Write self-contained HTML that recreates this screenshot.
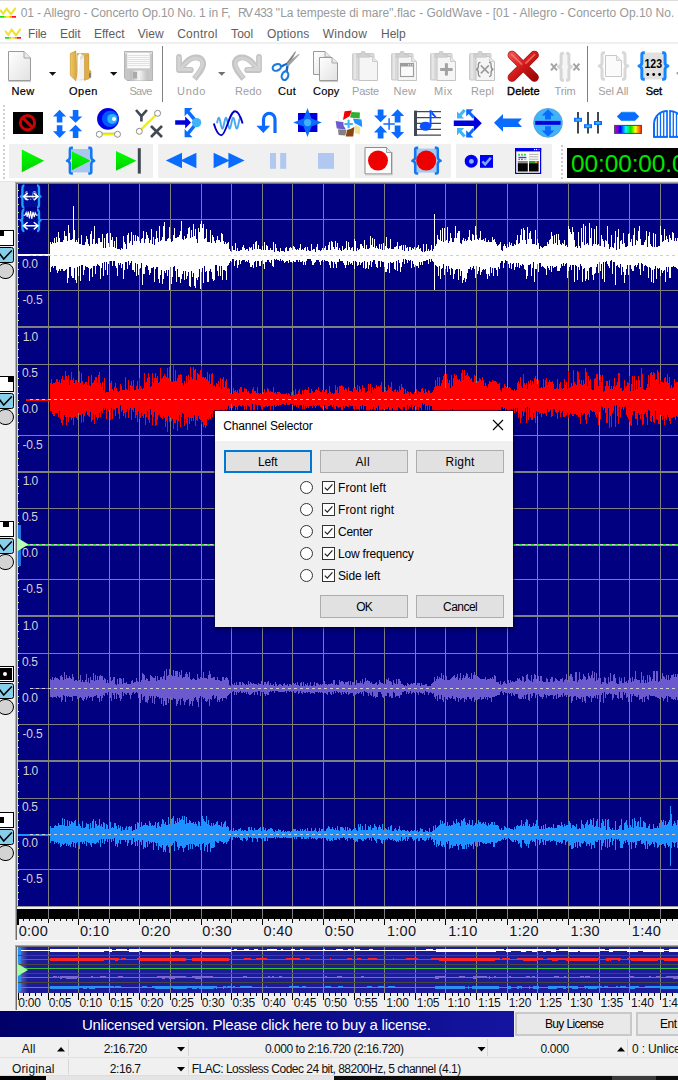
<!DOCTYPE html><html><head><meta charset="utf-8"><title>GoldWave</title><style>
*{margin:0;padding:0;box-sizing:border-box}
html,body{width:678px;height:1080px;overflow:hidden;background:#f0f0f0;font-family:"Liberation Sans",sans-serif}
#r{position:absolute;left:0;top:0;width:678px;height:1080px;overflow:hidden;background:#f0f0f0}
.t{position:absolute;white-space:nowrap;line-height:20px;height:20px}
.a{position:absolute}
svg{position:absolute;overflow:visible}
</style></head><body><div id="r">
<div class="a" style="left:0;top:0;width:678px;height:43px;background:#fff"></div>
<div class="a" style="left:0;top:0;width:678px;height:1px;background:#dcdcdc"></div>
<svg style="left:0px;top:7.0px" width="17" height="12" viewBox="0 0 17 12"><polyline points="0.3,2.6 3.3,6.4 6.6,1.2 11,6.8 15.6,0.6" fill="none" stroke="#c8b400" stroke-width="1.6" stroke-linejoin="miter" transform="translate(0,0.7)" opacity="0.6"/><polyline points="0.3,2.6 3.3,6.4 6.6,1.2 11,6.8 15.6,0.6" fill="none" stroke="#f4e61e" stroke-width="1.5" stroke-linejoin="miter"/><rect x="0" y="9" width="4" height="1.7" fill="#10e010"/><rect x="4" y="9" width="2.5" height="1.7" fill="#a0e800"/><rect x="6.5" y="9" width="3" height="1.7" fill="#f8f000"/><rect x="9.5" y="9" width="2.5" height="1.7" fill="#ff9000"/><rect x="12" y="9" width="4" height="1.7" fill="#ff1010"/></svg>
<svg style="left:5px;top:28.1px" width="17" height="12" viewBox="0 0 17 12"><polyline points="0.3,2.6 3.3,6.4 6.6,1.2 11,6.8 15.6,0.6" fill="none" stroke="#c8b400" stroke-width="1.6" stroke-linejoin="miter" transform="translate(0,0.7)" opacity="0.6"/><polyline points="0.3,2.6 3.3,6.4 6.6,1.2 11,6.8 15.6,0.6" fill="none" stroke="#f4e61e" stroke-width="1.5" stroke-linejoin="miter"/><rect x="0" y="9" width="4" height="1.7" fill="#10e010"/><rect x="4" y="9" width="2.5" height="1.7" fill="#a0e800"/><rect x="6.5" y="9" width="3" height="1.7" fill="#f8f000"/><rect x="9.5" y="9" width="2.5" height="1.7" fill="#ff9000"/><rect x="12" y="9" width="4" height="1.7" fill="#ff1010"/></svg>
<div class="t" style="left:20.70px;top:2.54px;font-size:12px;color:#999;letter-spacing:-0.091px;">01 - Allegro - Concerto Op.10 No. 1 in F,</div>
<div class="t" style="left:238.00px;top:2.54px;font-size:12px;color:#999;letter-spacing:-1.327px;">RV</div>
<div class="t" style="left:254.20px;top:2.54px;font-size:12px;color:#999;letter-spacing:-0.607px;">433</div>
<div class="t" style="left:275.60px;top:2.54px;font-size:12px;color:#999;letter-spacing:-0.024px;">''La tempeste di mare''.flac</div>
<div class="t" style="left:419.20px;top:2.54px;font-size:12px;color:#999;letter-spacing:0.002px;">- GoldWave - [01 - Allegro - Concerto Op.10 No.</div>
<div class="t" style="left:28.00px;top:24.34px;font-size:12px;color:#5e5e5e;letter-spacing:-0.184px;">File</div>
<div class="t" style="left:59.90px;top:24.34px;font-size:12px;color:#5e5e5e;letter-spacing:0.005px;">Edit</div>
<div class="t" style="left:93.90px;top:24.34px;font-size:12px;color:#5e5e5e;letter-spacing:0.039px;">Effect</div>
<div class="t" style="left:137.70px;top:24.34px;font-size:12px;color:#5e5e5e;letter-spacing:0.027px;">View</div>
<div class="t" style="left:177.20px;top:24.34px;font-size:12px;color:#5e5e5e;letter-spacing:0.245px;">Control</div>
<div class="t" style="left:231.10px;top:24.34px;font-size:12px;color:#5e5e5e;letter-spacing:0.047px;">Tool</div>
<div class="t" style="left:267.10px;top:24.34px;font-size:12px;color:#5e5e5e;letter-spacing:0.121px;">Options</div>
<div class="t" style="left:322.70px;top:24.34px;font-size:12px;color:#5e5e5e;letter-spacing:0.320px;">Window</div>
<div class="t" style="left:381.10px;top:24.34px;font-size:12px;color:#5e5e5e;letter-spacing:-0.045px;">Help</div>
<div class="a" style="left:0;top:43px;width:678px;height:136px;background:#f0f0f0"></div>
<div class="a" style="left:0;top:179px;width:678px;height:3px;background:#fff"></div>
<div class="a" style="left:0;top:42px;width:678px;height:2px;background:#f0f0f0"></div>
<div class="a" style="left:0;top:44px;width:678px;height:138px;background:#fff"></div>
<div class="a" style="left:9px;top:144px;width:144px;height:34px;background:#f0f0f0"></div>
<div class="a" style="left:158px;top:144px;width:192px;height:34px;background:#f0f0f0"></div>
<div class="a" style="left:355px;top:144px;width:96px;height:34px;background:#f0f0f0"></div>
<div class="a" style="left:456px;top:144px;width:96px;height:34px;background:#f0f0f0"></div>
<div class="a" style="left:0;top:181px;width:678px;height:1px;background:#e4e4e4"></div>
<div class="a" style="left:3px;top:105px;width:2px;height:36px;background:repeating-linear-gradient(180deg,#d0d0d0 0,#d0d0d0 2px,#fff 2px,#fff 4px)"></div>
<div class="a" style="left:3px;top:145px;width:2px;height:35px;background:repeating-linear-gradient(180deg,#d0d0d0 0,#d0d0d0 2px,#fff 2px,#fff 4px)"></div>
<div class="a" style="left:561px;top:145px;width:2px;height:36px;background:repeating-linear-gradient(180deg,#d0d0d0 0,#d0d0d0 2px,#fff 2px,#fff 4px)"></div>
<div class="a" style="left:162px;top:46px;width:1px;height:56px;background:#808080"></div>
<div class="a" style="left:587px;top:46px;width:1px;height:56px;background:#808080"></div>
<div class="t" style="left:11.50px;top:81.09px;font-size:11px;color:#000;letter-spacing:0.332px;-webkit-text-stroke:0.18px #000;">New</div>
<div class="t" style="left:69.00px;top:81.09px;font-size:11px;color:#000;letter-spacing:0.498px;-webkit-text-stroke:0.18px #000;">Open</div>
<div class="t" style="left:129.40px;top:81.09px;font-size:11px;color:#a0a0a0;letter-spacing:-0.718px;">Save</div>
<div class="t" style="left:177.10px;top:81.09px;font-size:11px;color:#a0a0a0;letter-spacing:0.651px;">Undo</div>
<div class="t" style="left:235.00px;top:81.09px;font-size:11px;color:#a0a0a0;letter-spacing:0.076px;">Redo</div>
<div class="t" style="left:278.10px;top:81.09px;font-size:11px;color:#000;letter-spacing:0.328px;-webkit-text-stroke:0.18px #000;">Cut</div>
<div class="t" style="left:313.00px;top:81.09px;font-size:11px;color:#000;letter-spacing:0.230px;-webkit-text-stroke:0.18px #000;">Copy</div>
<div class="t" style="left:352.10px;top:81.09px;font-size:11px;color:#a0a0a0;letter-spacing:-0.286px;">Paste</div>
<div class="t" style="left:393.40px;top:81.09px;font-size:11px;color:#a0a0a0;letter-spacing:0.332px;">New</div>
<div class="t" style="left:434.10px;top:81.09px;font-size:11px;color:#a0a0a0;letter-spacing:0.465px;">Mix</div>
<div class="t" style="left:471.00px;top:81.09px;font-size:11px;color:#a0a0a0;letter-spacing:0.070px;">Repl</div>
<div class="t" style="left:507.00px;top:81.09px;font-size:11px;color:#000;letter-spacing:0.184px;-webkit-text-stroke:0.4px #000;">Delete</div>
<div class="t" style="left:554.60px;top:81.09px;font-size:11px;color:#a0a0a0;letter-spacing:-0.145px;">Trim</div>
<div class="t" style="left:598.30px;top:81.09px;font-size:11px;color:#a0a0a0;letter-spacing:-0.068px;">Sel All</div>
<div class="t" style="left:645.80px;top:81.09px;font-size:11px;color:#000;letter-spacing:-0.104px;-webkit-text-stroke:0.35px #000;">Set</div>
<div class="a" style="left:567px;top:148px;width:111px;height:30px;background:#000"></div>
<div class="t" style="left:571.10px;top:154.15px;font-size:24.4px;color:#00e600;letter-spacing:1.477px;letter-spacing:-0.1px;">00:00:00.0</div>
<svg style="left:0;top:0" width="678" height="184" viewBox="0 0 678 184"><defs>
<linearGradient id="pg" x1="0" y1="0" x2="1" y2="1"><stop offset="0" stop-color="#ffffff"/><stop offset="1" stop-color="#e2e2e2"/></linearGradient>
<linearGradient id="gr" x1="0" y1="0" x2="0" y2="1"><stop offset="0" stop-color="#00ff00"/><stop offset="1" stop-color="#00d000"/></linearGradient>
<linearGradient id="rd" x1="0" y1="0" x2="1" y2="1"><stop offset="0" stop-color="#f04848"/><stop offset="0.5" stop-color="#d01818"/><stop offset="1" stop-color="#a00808"/></linearGradient>
<linearGradient id="fo" x1="0" y1="0" x2="1" y2="0"><stop offset="0" stop-color="#f0c860"/><stop offset="1" stop-color="#d8a440"/></linearGradient>
<linearGradient id="rb" x1="0" y1="0" x2="1" y2="0"><stop offset="0" stop-color="#d000c0"/><stop offset="0.1" stop-color="#8000d0"/><stop offset="0.22" stop-color="#0000ff"/><stop offset="0.42" stop-color="#00ffff"/><stop offset="0.6" stop-color="#00e000"/><stop offset="0.78" stop-color="#ffff00"/><stop offset="0.9" stop-color="#ff8000"/><stop offset="1" stop-color="#ff2000"/></linearGradient>
<linearGradient id="sv" x1="0" y1="0" x2="1" y2="0"><stop offset="0" stop-color="#b8b8b8"/><stop offset="0.5" stop-color="#f4f4f4"/><stop offset="1" stop-color="#c0c0c0"/></linearGradient>
</defs><path d="M8.5 51.5H24L30.5 58V80.5H8.5Z" fill="url(#pg)" stroke="#9a9a9a" stroke-width="1"/><path d="M24 51.5V58H30.5" fill="#e8e8e8" stroke="#9a9a9a" stroke-width="0.8"/><path d="M8.5 81.6H31" stroke="#c8c8c8" stroke-width="1"/><polygon points="49,72 56.2,72 52.6,75.8" fill="#111"/><polygon points="110,72 117.4,72 113.7,75.8" fill="#111"/><polygon points="218,72 225.4,72 221.7,75.8" fill="#707070"/><path d="M70.5 53.5L76 50.8L76 78L70.5 75Z" fill="#d8a848"/><path d="M70.3 53.5L75.8 51L77 78.5L76 81L70.3 75.5Z" fill="url(#fo)" stroke="#c89838" stroke-width="0.6"/><path d="M77 53.5H88.5V79H77Z" fill="#e4b650" stroke="#c89838" stroke-width="0.6"/><path d="M77.5 56L80 53L83 56V80H77.5Z" fill="#ffffff" stroke="#d0d0d0" stroke-width="0.5"/><path d="M80 57L82 54.5L85.5 57V80H80Z" fill="#e0e0e0"/><path d="M76 81L80.5 59.5L84 57.5L84 78.5Z" fill="#f4f4f4" opacity="0.9"/><path d="M84.5 56.5L88.8 54.5V70L91 71V77.5L84.5 80.5Z" fill="#e0ac48" stroke="#c49030" stroke-width="0.5"/><rect x="89" y="73" width="1.6" height="4.5" fill="#3080e8"/><path d="M124.5 51.5H152.5V80.5H127L124.5 78Z" fill="#c6c6c6" stroke="#b4b4b4" stroke-width="1"/><rect x="127" y="52.5" width="23" height="16" fill="#fbfbfb" stroke="#d0d0d0" stroke-width="0.6"/><path d="M127.5 55.5H149.5M127.5 57.5H149.5M127.5 59.5H149.5M127.5 61.5H149.5M127.5 63.5H149.5M127.5 65.5H149.5" stroke="#dedede" stroke-width="0.9"/><rect x="130.5" y="70.5" width="17" height="10" fill="url(#sv)" /><rect x="133" y="72" width="4" height="6.5" fill="#aaaaaa"/><rect x="125.3" y="52.3" width="1.3" height="1.5" fill="#f0f0f0"/><rect x="150.6" y="52.3" width="1.3" height="1.5" fill="#f0f0f0"/><g transform="translate(176,54)"><path d="M3 2.8V16M3 16H14.8" fill="none" stroke="#c4c4c4" stroke-width="5.8" stroke-linecap="round" stroke-linejoin="round"/><path d="M3 16L10 8.4C14 4.2 18 3.3 21 3.5C25.5 3.8 27.6 7 27.2 10.5C26.8 14.5 24 18 18.4 24.8" fill="none" stroke="#c4c4c4" stroke-width="5.8" stroke-linecap="butt" stroke-linejoin="round"/><path d="M3 3V15.6H14.6" fill="none" stroke="#d4d4d4" stroke-width="3" stroke-linecap="round" stroke-linejoin="round"/><path d="M4 15L10.4 8.6C14 4.8 18 4 21 4.2C25 4.5 26.9 7.2 26.5 10.5C26.1 14.3 23.6 17.4 18.6 23.6" fill="none" stroke="#d2d2d2" stroke-width="2.8" stroke-linecap="butt"/></g><g transform="translate(262,54) scale(-1,1)"><path d="M3 2.8V16M3 16H14.8" fill="none" stroke="#c4c4c4" stroke-width="5.8" stroke-linecap="round" stroke-linejoin="round"/><path d="M3 16L10 8.4C14 4.2 18 3.3 21 3.5C25.5 3.8 27.6 7 27.2 10.5C26.8 14.5 24 18 18.4 24.8" fill="none" stroke="#c4c4c4" stroke-width="5.8" stroke-linecap="butt" stroke-linejoin="round"/><path d="M3 3V15.6H14.6" fill="none" stroke="#d4d4d4" stroke-width="3" stroke-linecap="round" stroke-linejoin="round"/><path d="M4 15L10.4 8.6C14 4.8 18 4 21 4.2C25 4.5 26.9 7.2 26.5 10.5C26.1 14.3 23.6 17.4 18.6 23.6" fill="none" stroke="#d2d2d2" stroke-width="2.8" stroke-linecap="butt"/></g><polygon points="285.2,64.6 295.2,51.3 296,51.9 288.2,66" fill="#8e8e8e"/><polygon points="286,63.4 299,53.7 299.6,54.5 288.6,66.2" fill="#a2a2a2"/><path d="M287 63.6L293.6 55.6" stroke="#6e6e6e" stroke-width="0.7"/><path d="M280.4 65.4L286.8 62.8L287.2 64.6L281.6 67.8Z" fill="#1668c8"/><path d="M285.2 71.6L286.4 65.2L288.6 66L287.8 72Z" fill="#1668c8"/><ellipse cx="276.8" cy="67.4" rx="4.3" ry="3.2" transform="rotate(-24 276.8 67.4)" fill="#fdfdfd" stroke="#1c7cdc" stroke-width="2.1"/><ellipse cx="285" cy="75.7" rx="3.2" ry="4.4" transform="rotate(17 285 75.7)" fill="#fdfdfd" stroke="#1c7cdc" stroke-width="2.1"/><path d="M313.5 51.5H325L330.5 57V74.5H313.5Z" fill="url(#pg)" stroke="#9a9a9a" stroke-width="1"/><path d="M325 51.5V57H330.5" fill="#e8e8e8" stroke="#9a9a9a" stroke-width="0.8"/><path d="M319.5 57.5H332L337.5 63V80.5H319.5Z" fill="url(#pg)" stroke="#9a9a9a" stroke-width="1"/><path d="M332 57.5V63H337.5" fill="#e8e8e8" stroke="#9a9a9a" stroke-width="0.8"/><path d="M319.5 81.6H338" stroke="#c8c8c8" stroke-width="1"/><rect x="352.5" y="53.5" width="21.5" height="26.5" rx="1" fill="#d9d9d9" stroke="#cccccc" stroke-width="1"/><path d="M355 53.5V79" stroke="#e6e6e6" stroke-width="2"/><path d="M359.0 56.5H372.5L377.5 61.5V80.5H359.0Z" fill="#f5f5f5" stroke="#c4c4c4" stroke-width="1"/><path d="M372.5 56.5V61.5H377.5" fill="#e8e8e8" stroke="#c4c4c4" stroke-width="0.8"/><path d="M357 57.2V54.6H360.6L361.6 51.6H364.6L365.6 54.6H369.4V57.2Z" fill="#d2d2d2" stroke="#c2c2c2" stroke-width="0.7"/><rect x="391.5" y="53.5" width="21.5" height="26.5" rx="1" fill="#d9d9d9" stroke="#cccccc" stroke-width="1"/><path d="M394 53.5V79" stroke="#e6e6e6" stroke-width="2"/><path d="M398.0 56.5H411.5L416.5 61.5V80.5H398.0Z" fill="#f5f5f5" stroke="#c4c4c4" stroke-width="1"/><path d="M411.5 56.5V61.5H416.5" fill="#e8e8e8" stroke="#c4c4c4" stroke-width="0.8"/><path d="M396 57.2V54.6H399.6L400.6 51.6H403.6L404.6 54.6H408.4V57.2Z" fill="#d2d2d2" stroke="#c2c2c2" stroke-width="0.7"/><rect x="430.5" y="53.5" width="21.5" height="26.5" rx="1" fill="#d9d9d9" stroke="#cccccc" stroke-width="1"/><path d="M433 53.5V79" stroke="#e6e6e6" stroke-width="2"/><path d="M437.0 56.5H450.5L455.5 61.5V80.5H437.0Z" fill="#f5f5f5" stroke="#c4c4c4" stroke-width="1"/><path d="M450.5 56.5V61.5H455.5" fill="#e8e8e8" stroke="#c4c4c4" stroke-width="0.8"/><path d="M435 57.2V54.6H438.6L439.6 51.6H442.6L443.6 54.6H447.4V57.2Z" fill="#d2d2d2" stroke="#c2c2c2" stroke-width="0.7"/><rect x="469.5" y="53.5" width="21.5" height="26.5" rx="1" fill="#d9d9d9" stroke="#cccccc" stroke-width="1"/><path d="M472 53.5V79" stroke="#e6e6e6" stroke-width="2"/><path d="M476.0 56.5H489.5L494.5 61.5V80.5H476.0Z" fill="#f5f5f5" stroke="#c4c4c4" stroke-width="1"/><path d="M489.5 56.5V61.5H494.5" fill="#e8e8e8" stroke="#c4c4c4" stroke-width="0.8"/><path d="M474 57.2V54.6H477.6L478.6 51.6H481.6L482.6 54.6H486.4V57.2Z" fill="#d2d2d2" stroke="#c2c2c2" stroke-width="0.7"/><rect x="400.5" y="63.5" width="13" height="13" fill="#fafafa" stroke="#9c9c9c" stroke-width="1.1"/><rect x="400.5" y="63.5" width="13" height="3" fill="#9c9c9c"/><rect x="408" y="64.4" width="1" height="1" fill="#fff"/><rect x="410" y="64.4" width="1" height="1" fill="#fff"/><rect x="412" y="64.4" width="1" height="1" fill="#fff"/><path d="M440.2 69.4H452.6M446.4 63.2V75.6" stroke="#a2a2a2" stroke-width="3"/><path d="M480.5 62.3C478.2 62.3 478.4 64 478.4 66C478.4 68 477.6 69.3 476 69.4C477.6 69.5 478.4 70.8 478.4 72.8C478.4 74.8 478.2 76.6 480.5 76.6" fill="none" stroke="#8c8c8c" stroke-width="1.3"/><path d="M489 62.3C491.3 62.3 491.1 64 491.1 66C491.1 68 491.9 69.3 493.5 69.4C491.9 69.5 491.1 70.8 491.1 72.8C491.1 74.8 491.3 76.6 489 76.6" fill="none" stroke="#8c8c8c" stroke-width="1.3"/><path d="M480.8 65.4L488.8 73.4M488.8 65.4L480.8 73.4" stroke="#9a9a9a" stroke-width="1.5"/><path d="M512 55.2L534.4 77.3M534.4 55.2L512 77.3" fill="none" stroke="#a01010" stroke-width="8.8" stroke-linecap="round"/><path d="M512 55.2L534.4 77.3M534.4 55.2L512 77.3" fill="none" stroke="url(#rd)" stroke-width="7.6" stroke-linecap="round"/><path d="M511.6 54.4L521.6 64.2M534.6 54.6L526 63" stroke="#ff9090" stroke-width="1.8" opacity="0.6" stroke-linecap="round"/><rect x="561" y="53" width="8" height="27.5" fill="#f6f6f6"/><path d="M563.8 53.3H562.6999999999999Q561.0999999999999 53.3 561.0999999999999 55.3V63.199999999999996C561.0999999999999 65.39999999999999 560.3 66.39999999999999 558.52 66.8C560.3 67.2 561.0999999999999 68.2 561.0999999999999 70.39999999999999V78.3Q561.0999999999999 80.3 562.6999999999999 80.3H563.8" fill="none" stroke="#d6d6d6" stroke-width="3" stroke-linecap="butt" stroke-linejoin="round"/><path d="M566.2 53.3H567.3000000000001Q568.9000000000001 53.3 568.9000000000001 55.3V63.199999999999996C568.9000000000001 65.39999999999999 569.7 66.39999999999999 571.48 66.8C569.7 67.2 568.9000000000001 68.2 568.9000000000001 70.39999999999999V78.3Q568.9000000000001 80.3 567.3000000000001 80.3H566.2" fill="none" stroke="#d6d6d6" stroke-width="3" stroke-linecap="butt" stroke-linejoin="round"/><path d="M551 63.6L557 70.4M557 63.6L551 70.4M573.4 63.6L579.4 70.4M579.4 63.6L573.4 70.4" stroke="#a4a4a4" stroke-width="2"/><path d="M605.0 52.7H603.63Q602.03 52.7 602.03 54.7V62.4C602.03 64.6 601.23 65.6 599.192 66.0C601.23 66.4 602.03 67.4 602.03 69.6V77.3Q602.03 79.3 603.63 79.3H605.0" fill="none" stroke="#d8d8d8" stroke-width="3" stroke-linecap="butt" stroke-linejoin="round"/><path d="M622 52.7H623.37Q624.97 52.7 624.97 54.7V62.4C624.97 64.6 625.77 65.6 627.808 66.0C625.77 66.4 624.97 67.4 624.97 69.6V77.3Q624.97 79.3 623.37 79.3H622" fill="none" stroke="#d8d8d8" stroke-width="3" stroke-linecap="butt" stroke-linejoin="round"/><path d="M605.5 55.5H616.5L621.5 60.5V76.5H605.5Z" fill="#fbfbfb" stroke="#c8c8c8" stroke-width="1"/><path d="M616.5 55.5V60.5H621.5" fill="#e8e8e8" stroke="#c8c8c8" stroke-width="0.8"/><rect x="642.5" y="52.5" width="21.5" height="27" fill="#e1e1e1"/><path d="M644.8000000000001 52.7H643.4300000000001Q641.83 52.7 641.83 54.7V62.4C641.83 64.6 641.0300000000001 65.6 638.9920000000001 66.0C641.0300000000001 66.4 641.83 67.4 641.83 69.6V77.3Q641.83 79.3 643.4300000000001 79.3H644.8000000000001" fill="none" stroke="#1484ff" stroke-width="3" stroke-linecap="butt" stroke-linejoin="round"/><path d="M662.1 52.7H663.47Q665.07 52.7 665.07 54.7V62.4C665.07 64.6 665.87 65.6 667.908 66.0C665.87 66.4 665.07 67.4 665.07 69.6V77.3Q665.07 79.3 663.47 79.3H662.1" fill="none" stroke="#1484ff" stroke-width="3" stroke-linecap="butt" stroke-linejoin="round"/><text x="653.3" y="68.4" font-family="Liberation Sans" font-weight="bold" font-size="12" text-anchor="middle" fill="#000" textLength="17.6" lengthAdjust="spacingAndGlyphs">123</text><circle cx="647.8" cy="74.5" r="1.4" fill="#000"/><circle cx="653.7" cy="74.5" r="1.4" fill="#000"/><circle cx="659.6" cy="74.5" r="1.4" fill="#000"/><rect x="676.6" y="72" width="2" height="2.4" fill="#a0a0a0"/><rect x="13" y="112" width="30" height="22" fill="#000"/><circle cx="27.5" cy="122.7" r="7.1" fill="none" stroke="#c80404" stroke-width="3"/><path d="M22.6 117.6L32.6 127.6" stroke="#c80404" stroke-width="3"/><polygon points="59.6,109.8 66.2,116.6 62.4,116.6 62.4,122.4 56.800000000000004,122.4 56.800000000000004,116.6 53.0,116.6" fill="#0a6cff"/><polygon points="59.6,138 66.2,131.2 62.4,131.2 62.4,125.2 56.800000000000004,125.2 56.800000000000004,131.2 53.0,131.2" fill="#0a6cff"/><polygon points="75.6,122.8 82.19999999999999,116.6 78.39999999999999,116.6 78.39999999999999,110 72.8,110 72.8,116.6 69.0,116.6" fill="#0a6cff"/><polygon points="75.6,124.8 82.19999999999999,131.2 78.39999999999999,131.2 78.39999999999999,138 72.8,138 72.8,131.2 69.0,131.2" fill="#0a6cff"/><circle cx="108" cy="118.9" r="10.9" fill="#0000e4"/><circle cx="110.2" cy="118.9" r="8.2" fill="#0058ff"/><circle cx="112.2" cy="118.9" r="5" fill="#30b0ff"/><circle cx="114" cy="118.9" r="2" fill="#fff"/><path d="M102 134.3H115" stroke="#f0f000" stroke-width="2.2"/><path d="M102 133H115" stroke="#a0a020" stroke-width="0.5"/><circle cx="99.3" cy="134.3" r="3" fill="#fff" stroke="#808080" stroke-width="0.9"/><circle cx="117.5" cy="134.3" r="3" fill="#fff" stroke="#808080" stroke-width="0.9"/><path d="M136 110L141.4 116.2L146.9 110M141.4 116V121.6" fill="none" stroke="#404852" stroke-width="2.6"/><path d="M151 126L162 137M162 126L151 137" fill="none" stroke="#404852" stroke-width="2.7"/><path d="M141.2 129.4L155.6 115.2" stroke="#f0f000" stroke-width="2.2"/><circle cx="139.3" cy="131.3" r="3" fill="#fff" stroke="#808080" stroke-width="0.9"/><circle cx="157.6" cy="113.3" r="3" fill="#fff" stroke="#808080" stroke-width="0.9"/><path d="M184.6 108H192.6L189.6 111L196 118.6L193.4 121L187.2 113.4L184.6 116.2Z" fill="#0a6cff"/><path d="M184.6 137.2H192.6L189.6 134.2L196 126.6L193.4 124.2L187.2 131.8L184.6 129Z" fill="#0a6cff"/><path d="M175.2 120.2H185.2V116.4L191 122.5L185.2 128.6V124.8H175.2Z" fill="#0000dc"/><circle cx="196.6" cy="122.6" r="4.7" fill="#40b4f8"/><polyline points="217.0,123.2 217.5,120.9 218.0,119.1 218.5,118.0 219.0,117.9 219.5,118.8 220.0,120.5 220.5,122.7 221.0,125.0 221.5,127.0 222.0,128.3 222.5,128.6 223.0,127.9 223.5,126.3 224.0,124.1 224.5,121.8 225.0,119.7 225.5,118.3 226.0,117.8 226.5,118.3 227.0,119.7 227.5,121.8 228.0,124.1 228.5,126.3 229.0,127.9 229.5,128.6 230.0,128.3 230.5,127.0 231.0,125.0 231.5,122.7 232.0,120.5 232.5,118.8 233.0,117.9 233.5,118.0 234.0,119.1 234.5,120.9 235.0,123.2 235.5,125.5 236.0,127.3 236.5,128.4 237.0,128.5 237.5,127.6 238.0,125.9 238.5,123.7 239.0,121.4 239.5,119.4 240.0,118.1 240.5,117.8" fill="none" stroke="#48a8f0" stroke-width="1.9"/><path d="M213.8 123.5C216 131 218.5 135.2 221.4 135.2C226 135.2 229.5 111.2 235 111.2C238 111.2 240.5 116 242.6 123.4" fill="none" stroke="#0000c8" stroke-width="1.9"/><path d="M275 133V119.2A5.75 5.75 0 0 0 263.5 119.2V126.2" fill="none" stroke="#0a6cff" stroke-width="3.2"/><polygon points="256.4,125.8 270.2,125.8 263.3,133" fill="#0a6cff"/><rect x="298" y="113" width="19.4" height="19" fill="#0000dc"/><path d="M307.5 108L311.4 118.6L321.8 122.5L311.4 126.4L307.5 137L303.6 126.4L293.2 122.5L303.6 118.6Z" fill="#0a6cff"/><circle cx="307.6" cy="122.6" r="3.6" fill="#40b4f8"/><path d="M338 112.6L344 111.4L342.4 120.6L338.6 121Z" fill="#ffffff" stroke="#e4e4e4" stroke-width="0.5"/><path d="M344.6 111.2L351.8 110.4L349.6 116.2L343 120Z" fill="#f00000"/><path d="M351.4 112L360 112.4L359.6 118.4L350 117.6Z" fill="#30b030"/><path d="M353 118.6L361.6 119.4L362.2 127L354.6 123.2Z" fill="#1e90ff"/><path d="M355 124.6L360.4 127.6L359.8 134.4L354.6 133Z" fill="#f0e498"/><path d="M347 130L354.4 127L353.2 136.4L345.8 136.6Z" fill="#8a4414"/><path d="M338 129.2L346.4 129.8L345.4 135.4L338.6 135Z" fill="#808080"/><path d="M335.6 121L343.6 122.2L345.6 129.4L336.8 128.6Z" fill="#6a5acd"/><circle cx="348.6" cy="124" r="5.2" fill="#fff"/><path d="M344.4 124H352.8M348.6 119.8V128.2" stroke="#40b4f8" stroke-width="2.1"/><polygon points="380.6,122.2 387.20000000000005,115.4 383.5,115.4 383.5,109.4 377.70000000000005,109.4 377.70000000000005,115.4 374.0,115.4" fill="#0a6cff"/><polygon points="397.6,109.2 404.20000000000005,116 400.5,116 400.5,122.4 394.70000000000005,122.4 394.70000000000005,116 391.0,116" fill="#0a6cff"/><polygon points="380.6,125.6 387.20000000000005,132.4 383.5,132.4 383.5,138.6 377.70000000000005,138.6 377.70000000000005,132.4 374.0,132.4" fill="#0a6cff"/><polygon points="397.6,138.8 404.20000000000005,132 400.5,132 400.5,125.6 394.70000000000005,125.6 394.70000000000005,132 391.0,132" fill="#0a6cff"/><path d="M383.4 124H394.8M389.1 118.3V129.7" stroke="#0a6cff" stroke-width="1.5"/><rect x="414" y="110.6" width="3" height="25.4" fill="#404852"/><path d="M414 111.6H441M414 117.5H441M414 123.4H441M414 129.3H441M414 135.2H441" stroke="#404852" stroke-width="1.25"/><ellipse cx="425.5" cy="126.3" rx="5.7" ry="4.5" fill="#0a50ff"/><rect x="429.6" y="110.2" width="1.9" height="16" fill="#0a50ff"/><path d="M431.4 110.4L437 117.6H435L431.4 114.2Z" fill="#0a50ff"/><path d="M453.8 120.6H473.8V115.2L481.8 123.2L473.8 131.2V125.9H453.8Z" fill="#0000dc"/><path d="M464.6 110L458.5 117.1" stroke="#40b4f8" stroke-width="3"/><polygon points="457,118.6 464.2,118.6 457,111.39999999999999" fill="#40b4f8"/><path d="M464.6 136.6L458.5 129.5" stroke="#40b4f8" stroke-width="3"/><polygon points="457,128 464.2,128 457,135.2" fill="#40b4f8"/><path d="M473.8 117.6L467.7 110.7" stroke="#0a6cff" stroke-width="3"/><polygon points="466.2,109.2 473.4,109.2 466.2,116.4" fill="#0a6cff"/><path d="M473.8 129L467.7 135.9" stroke="#0a6cff" stroke-width="3"/><polygon points="466.2,137.4 473.4,137.4 466.2,130.20000000000002" fill="#0a6cff"/><path d="M494 122.7L503 114V118.6H522L518.2 122.8L522 127H503V131.8Z" fill="#0a6cff"/><circle cx="548" cy="122.8" r="14.4" fill="#40b4f8" stroke="#5c9ad8" stroke-width="0.8"/><rect x="535.2" y="120.9" width="25.4" height="3.9" fill="#0000dc"/><polygon points="548,109.2 554.4,115.4 550.9,115.4 550.9,119.4 545.1,119.4 545.1,115.4 541.6,115.4" fill="#0a6cff"/><polygon points="548,136.4 554.4,130.4 550.9,130.4 550.9,126.2 545.1,126.2 545.1,130.4 541.6,130.4" fill="#0a6cff"/><path d="M578 112V133.6M588 112V133.6M598 112V133.6" stroke="#404852" stroke-width="2"/><rect x="574" y="117.8" width="8" height="4" fill="#0a6cff"/><rect x="575.6" y="118.8" width="4.8" height="2" fill="#40b4f8"/><rect x="584" y="124.2" width="8" height="4" fill="#0a6cff"/><rect x="585.6" y="125.2" width="4.8" height="2" fill="#40b4f8"/><rect x="594" y="121" width="8" height="4" fill="#0a6cff"/><rect x="595.6" y="122" width="4.8" height="2" fill="#40b4f8"/><path d="M616.8 116.4L621.4 111.9H634.8L639.2 116.4L634.8 120.9H621.4Z" fill="#0a6cff"/><path d="M621.6 112.2H634.6M621.6 120.6H634.6" stroke="#38a8ff" stroke-width="0.8"/><rect x="614.6" y="125.4" width="26.8" height="8" fill="url(#rb)" stroke="#404858" stroke-width="1"/><path d="M654 137V124.4C654 116.4 660 110.9 667.2 110.9" fill="none" stroke="#0a6cff" stroke-width="2"/><path d="M667 110.2V137.6" stroke="#0a6cff" stroke-width="1.7"/><path d="M657.4 116.6V136.5M660.5 113.6V136.5M663.7 111.8V136.5" stroke="#0a6cff" stroke-width="1.3"/><path d="M653 136.9H667.85" stroke="#0a6cff" stroke-width="2"/><g transform="translate(1337,0) scale(-1,1)"><path d="M654 137V124.4C654 116.4 660 110.9 667.2 110.9" fill="none" stroke="#0a6cff" stroke-width="2"/><path d="M667 110.2V137.6" stroke="#0a6cff" stroke-width="1.7"/><path d="M657.4 116.6V136.5M660.5 113.6V136.5M663.7 111.8V136.5" stroke="#0a6cff" stroke-width="1.3"/><path d="M653 136.9H667.85" stroke="#0a6cff" stroke-width="2"/></g><polygon points="21.8,149.6 44.2,160.8 21.8,172.2" fill="url(#gr)"/><rect x="71.6" y="149" width="18.6" height="23.4" fill="#a9c8f0"/><path d="M72.89999999999999 147.9H71.52999999999999Q69.92999999999999 147.9 69.92999999999999 149.9V157.1C69.92999999999999 159.29999999999998 69.13 160.29999999999998 67.092 160.7C69.13 161.1 69.92999999999999 162.1 69.92999999999999 164.29999999999998V171.5Q69.92999999999999 173.5 71.52999999999999 173.5H72.89999999999999" fill="none" stroke="#1478f0" stroke-width="2.6" stroke-linecap="butt" stroke-linejoin="round"/><path d="M88.3 147.9H89.67Q91.27 147.9 91.27 149.9V157.1C91.27 159.29999999999998 92.07 160.29999999999998 94.10799999999999 160.7C92.07 161.1 91.27 162.1 91.27 164.29999999999998V171.5Q91.27 173.5 89.67 173.5H88.3" fill="none" stroke="#1478f0" stroke-width="2.6" stroke-linecap="butt" stroke-linejoin="round"/><polygon points="71.8,151.2 90.6,160.8 71.8,170.2" fill="url(#gr)"/><rect x="124" y="148" width="2.2" height="26" fill="#e2f6e2"/><polygon points="116,151 136.4,160.8 116,170.8" fill="url(#gr)"/><rect x="137.8" y="148.2" width="3" height="25.4" fill="#404852"/><polygon points="165.8,160.5 182,152.8 182,168.2" fill="#0a6cff"/><polygon points="180.4,160.5 196.4,152.8 196.4,168.2" fill="#0a6cff"/><polygon points="229.8,160.5 213.6,152.8 213.6,168.2" fill="#0a6cff"/><polygon points="244.6,160.5 228.4,152.8 228.4,168.2" fill="#0a6cff"/><rect x="270" y="153" width="6" height="15.8" fill="#b1c9f1"/><rect x="280.2" y="153" width="6" height="15.8" fill="#b1c9f1"/><rect x="318" y="153" width="16" height="15.8" fill="#b1c9f1"/><path d="M365.0 147.5H386.5L391.5 152.5V173.9H365.0Z" fill="#fbfbfb" stroke="#8c8c8c" stroke-width="1"/><path d="M386.5 147.5V152.5H391.5" fill="#e8e8e8" stroke="#8c8c8c" stroke-width="0.8"/><path d="M365 174.8H392.4V152" stroke="#c0c0c0" stroke-width="0.8" fill="none"/><circle cx="378" cy="160.6" r="10" fill="#ee0000"/><rect x="416" y="148.6" width="20.6" height="24" fill="#a9c8f0"/><path d="M418.20000000000005 147.9H416.83000000000004Q415.23 147.9 415.23 149.9V157.1C415.23 159.29999999999998 414.43 160.29999999999998 412.392 160.7C414.43 161.1 415.23 162.1 415.23 164.29999999999998V171.5Q415.23 173.5 416.83000000000004 173.5H418.20000000000005" fill="none" stroke="#1478f0" stroke-width="2.6" stroke-linecap="butt" stroke-linejoin="round"/><path d="M434.8 147.9H436.17Q437.77000000000004 147.9 437.77000000000004 149.9V157.1C437.77000000000004 159.29999999999998 438.57000000000005 160.29999999999998 440.60800000000006 160.7C438.57000000000005 161.1 437.77000000000004 162.1 437.77000000000004 164.29999999999998V171.5Q437.77000000000004 173.5 436.17 173.5H434.8" fill="none" stroke="#1478f0" stroke-width="2.6" stroke-linecap="butt" stroke-linejoin="round"/><circle cx="426.2" cy="160.6" r="10" fill="#ee0000"/><circle cx="471.2" cy="161.2" r="6.5" fill="#0000f0"/><circle cx="471.4" cy="161.4" r="2.4" fill="#86b4ff"/><rect x="480" y="155" width="13" height="12.8" fill="#0000f0"/><polyline points="482.4,161.4 485.2,164.4 490.8,157.8" fill="none" stroke="#78acff" stroke-width="2.5"/><rect x="515.6" y="148.6" width="25" height="24.8" fill="#fcfcf8" stroke="#0000e8" stroke-width="1.2"/><rect x="515" y="148" width="26.2" height="3.4" fill="#0000e8"/><rect x="534" y="148.9" width="1.2" height="1.3" fill="#fff"/><rect x="536" y="148.9" width="1.2" height="1.3" fill="#fff"/><rect x="538" y="148.9" width="2" height="1.3" fill="#f02020"/><rect x="518" y="153.8" width="2" height="2" fill="#40e040"/><rect x="521" y="153.8" width="2" height="2" fill="#40e040"/><rect x="524" y="153.8" width="2" height="2" fill="#40e040"/><rect x="518.4" y="156.8" width="8" height="1.4" fill="#2040ff"/><rect x="518.4" y="158.8" width="1.6" height="1.3" fill="#f03030"/><rect x="521" y="158.8" width="1.8" height="1.3" fill="#f03030"/><rect x="524" y="158.8" width="2.4" height="1.3" fill="#c0c0c0"/><path d="M529 154.4H538.4M529 156.8H538.4M529 159.2H538.4" stroke="#b0b0b0" stroke-width="1"/><rect x="517.8" y="161" width="10" height="2.2" fill="#8a8a8a"/><rect x="529" y="161" width="9.6" height="2.2" fill="#30a030"/><rect x="535" y="161" width="2.2" height="2.2" fill="#e0a020"/><rect x="537.2" y="161" width="1.4" height="2.2" fill="#e02020"/><rect x="517.8" y="163.2" width="10" height="8.4" fill="#050505"/><rect x="529" y="163.2" width="9.6" height="8.4" fill="#050505"/><path d="M517.4 172.2H539" stroke="#c8c8c8" stroke-width="0.8"/></svg>
<div class="a" style="left:15px;top:182px;width:663px;height:726px;background:#6e6e6e"></div>
<div class="a" style="left:15px;top:182px;width:1px;height:726px;background:#b4b4b4"></div>
<div class="a" style="left:15px;top:182px;width:663px;height:1px;background:#a8a8a8"></div>
<div class="a" style="left:17px;top:184px;width:661px;height:723px;background:#000080"></div>
<div class="a" style="left:17px;top:184px;width:1px;height:723px;background:#a8f0a8"></div>
<svg style="left:0;top:0" width="678" height="1080" viewBox="0 0 678 1080" shape-rendering="crispEdges"><path d="M48.5 184V906M78.5 184V906M109.5 184V906M139.5 184V906M170.5 184V906M201.5 184V906M231.5 184V906M262.5 184V906M292.5 184V906M323.5 184V906M354.5 184V906M384.5 184V906M415.5 184V906M445.5 184V906M476.5 184V906M507.5 184V906M537.5 184V906M568.5 184V906M599.5 184V906M629.5 184V906M660.5 184V906" stroke="#808080" stroke-width="1" fill="none"/><path d="M18 219.5H678M18 290.5H678M18 364.5H678M18 435.5H678M18 508.5H678M18 579.5H678M18 653.5H678M18 724.5H678M18 798.5H678M18 869.5H678" stroke="#808080" stroke-width="1" fill="none"/><path d="M18 327H678M18 472H678M18 616H678M18 761H678" stroke="#808080" stroke-width="2" fill="none"/><path d="M18 190.5h1.4M18 197.5h1.4M18 204.5h1.4M18 212.5h1.4M18 219.5h1.4M18 226.5h1.4M18 233.5h1.4M18 241.5h1.4M18 248.5h1.4M18 255.5h1.4M18 262.5h1.4M18 269.5h1.4M18 277.5h1.4M18 284.5h1.4M18 291.5h1.4M18 298.5h1.4M18 306.5h1.4M18 313.5h1.4M18 320.5h1.4M18 335.5h1.4M18 342.5h1.4M18 349.5h1.4M18 357.5h1.4M18 364.5h1.4M18 371.5h1.4M18 378.5h1.4M18 386.5h1.4M18 393.5h1.4M18 400.5h1.4M18 407.5h1.4M18 414.5h1.4M18 422.5h1.4M18 429.5h1.4M18 436.5h1.4M18 443.5h1.4M18 451.5h1.4M18 458.5h1.4M18 465.5h1.4M18 479.5h1.4M18 486.5h1.4M18 493.5h1.4M18 501.5h1.4M18 508.5h1.4M18 515.5h1.4M18 522.5h1.4M18 530.5h1.4M18 537.5h1.4M18 544.5h1.4M18 551.5h1.4M18 558.5h1.4M18 566.5h1.4M18 573.5h1.4M18 580.5h1.4M18 587.5h1.4M18 595.5h1.4M18 602.5h1.4M18 609.5h1.4M18 624.5h1.4M18 631.5h1.4M18 638.5h1.4M18 646.5h1.4M18 653.5h1.4M18 660.5h1.4M18 667.5h1.4M18 675.5h1.4M18 682.5h1.4M18 689.5h1.4M18 696.5h1.4M18 703.5h1.4M18 711.5h1.4M18 718.5h1.4M18 725.5h1.4M18 732.5h1.4M18 740.5h1.4M18 747.5h1.4M18 754.5h1.4M18 769.5h1.4M18 776.5h1.4M18 783.5h1.4M18 791.5h1.4M18 798.5h1.4M18 805.5h1.4M18 812.5h1.4M18 820.5h1.4M18 827.5h1.4M18 834.5h1.4M18 841.5h1.4M18 848.5h1.4M18 856.5h1.4M18 863.5h1.4M18 870.5h1.4M18 877.5h1.4M18 885.5h1.4M18 892.5h1.4M18 899.5h1.4" stroke="#b8f0b8" stroke-width="1" fill="none"/><path d="M18 255H50" stroke="#fff" stroke-width="2"/><path d="M50.5 242V272M51.5 244V267M52.5 242V266M53.5 243V268M54.5 238V266M55.5 243V266M56.5 237V270M57.5 242V273M58.5 232V271M59.5 238V269M60.5 242V271M61.5 242V269M62.5 242V269M63.5 240V271M64.5 231V271M65.5 236V270M66.5 236V269M67.5 241V283M68.5 225V278M69.5 233V267M70.5 240V267M71.5 240V276M72.5 239V278M73.5 206V278M74.5 230V268M75.5 242V280M76.5 240V283M77.5 242V267M78.5 238V276M79.5 244V266M80.5 244V281M81.5 235V265M82.5 245V265M83.5 245V275M84.5 245V270M85.5 242V266M86.5 236V267M87.5 239V267M88.5 244V268M89.5 246V281M90.5 234V269M91.5 231V268M92.5 244V277M93.5 239V266M94.5 226V266M95.5 244V274M96.5 243V266M97.5 244V264M98.5 238V265M99.5 238V266M100.5 242V279M101.5 242V268M102.5 234V263M103.5 248V276M104.5 238V262M105.5 248V270M106.5 234V262M107.5 233V275M108.5 243V264M109.5 247V261M110.5 233V261M111.5 240V261M112.5 237V266M113.5 247V261M114.5 241V261M115.5 248V266M116.5 237V268M117.5 249V276M118.5 249V263M119.5 249V265M120.5 250V263M121.5 248V268M122.5 249V264M123.5 236V279M124.5 242V270M125.5 244V262M126.5 249V262M127.5 235V269M128.5 233V261M129.5 243V265M130.5 241V263M131.5 232V261M132.5 245V270M133.5 235V270M134.5 241V272M135.5 235V263M136.5 241V276M137.5 236V264M138.5 237V275M139.5 241V269M140.5 243V268M141.5 239V263M142.5 238V285M143.5 231V274M144.5 243V274M145.5 239V267M146.5 232V265M147.5 235V266M148.5 238V270M149.5 243V275M150.5 240V273M151.5 229V268M152.5 244V268M153.5 237V267M154.5 245V282M155.5 239V269M156.5 231V267M157.5 238V267M158.5 242V279M159.5 226V283M160.5 241V275M161.5 240V270M162.5 237V284M163.5 226V279M164.5 222V271M165.5 241V273M166.5 241V270M167.5 239V276M168.5 238V270M169.5 227V290M170.5 239V267M171.5 242V284M172.5 241V277M173.5 235V267M174.5 228V266M175.5 238V271M176.5 238V282M177.5 237V269M178.5 237V277M179.5 235V277M180.5 231V283M181.5 221V279M182.5 239V274M183.5 240V271M184.5 236V280M185.5 239V271M186.5 238V279M187.5 234V276M188.5 228V272M189.5 227V286M190.5 238V287M191.5 230V271M192.5 237V277M193.5 224V273M194.5 236V286M195.5 229V288M196.5 239V278M197.5 243V280M198.5 228V277M199.5 232V269M200.5 224V289M201.5 221V272M202.5 228V268M203.5 224V283M204.5 239V266M205.5 238V272M206.5 229V271M207.5 242V282M208.5 242V282M209.5 242V271M210.5 230V269M211.5 243V272M212.5 235V279M213.5 237V281M214.5 241V280M215.5 243V265M216.5 240V265M217.5 236V271M218.5 240V276M219.5 240V266M220.5 242V276M221.5 233V266M222.5 234V280M223.5 241V270M224.5 244V270M225.5 242V271M226.5 244V280M227.5 243V266M228.5 242V265M229.5 249V263M230.5 251V261M231.5 252V262M232.5 246V259M233.5 250V259M234.5 250V266M235.5 243V261M236.5 251V260M237.5 248V268M238.5 251V265M239.5 251V260M240.5 250V264M241.5 250V261M242.5 247V260M243.5 245V260M244.5 248V260M245.5 250V262M246.5 249V261M247.5 249V262M248.5 251V260M249.5 247V263M250.5 248V267M251.5 247V267M252.5 250V265M253.5 244V268M254.5 249V262M255.5 242V261M256.5 241V267M257.5 249V261M258.5 245V261M259.5 249V266M260.5 249V266M261.5 250V261M262.5 246V260M263.5 250V264M264.5 242V269M265.5 250V262M266.5 245V262M267.5 246V260M268.5 250V260M269.5 250V262M270.5 248V263M271.5 250V260M272.5 250V266M273.5 242V267M274.5 252V259M275.5 244V260M276.5 248V259M277.5 251V260M278.5 251V260M279.5 252V261M280.5 248V259M281.5 251V261M282.5 251V260M283.5 251V261M284.5 252V263M285.5 248V262M286.5 247V261M287.5 251V261M288.5 251V263M289.5 248V260M290.5 247V262M291.5 248V262M292.5 250V263M293.5 246V261M294.5 247V262M295.5 249V262M296.5 250V260M297.5 249V260M298.5 250V262M299.5 248V260M300.5 244V262M301.5 250V262M302.5 249V261M303.5 250V265M304.5 248V262M305.5 247V265M306.5 251V261M307.5 247V259M308.5 250V259M309.5 251V259M310.5 251V259M311.5 244V261M312.5 250V265M313.5 249V265M314.5 249V263M315.5 252V262M316.5 247V260M317.5 244V260M318.5 250V260M319.5 250V262M320.5 251V265M321.5 250V261M322.5 248V260M323.5 250V262M324.5 248V260M325.5 246V261M326.5 250V261M327.5 250V261M328.5 245V262M329.5 242V265M330.5 250V268M331.5 241V261M332.5 242V262M333.5 247V268M334.5 249V262M335.5 241V264M336.5 247V268M337.5 243V262M338.5 250V262M339.5 248V259M340.5 250V261M341.5 251V261M342.5 246V261M343.5 250V263M344.5 249V265M345.5 248V268M346.5 241V265M347.5 250V261M348.5 242V265M349.5 247V262M350.5 250V264M351.5 248V263M352.5 247V265M353.5 251V261M354.5 239V269M355.5 241V261M356.5 251V262M357.5 248V266M358.5 250V265M359.5 249V262M360.5 244V265M361.5 244V263M362.5 246V262M363.5 248V268M364.5 240V261M365.5 249V269M366.5 245V268M367.5 249V262M368.5 249V269M369.5 248V265M370.5 236V261M371.5 245V267M372.5 238V262M373.5 247V260M374.5 239V260M375.5 248V264M376.5 246V267M377.5 248V268M378.5 249V261M379.5 244V261M380.5 249V267M381.5 244V261M382.5 250V262M383.5 243V262M384.5 250V267M385.5 246V272M386.5 237V272M387.5 248V269M388.5 249V263M389.5 248V273M390.5 239V262M391.5 249V263M392.5 249V263M393.5 249V262M394.5 247V269M395.5 247V270M396.5 246V261M397.5 242V271M398.5 249V260M399.5 246V263M400.5 246V272M401.5 245V267M402.5 250V262M403.5 245V259M404.5 251V264M405.5 245V259M406.5 248V260M407.5 247V263M408.5 251V260M409.5 247V261M410.5 247V260M411.5 250V268M412.5 248V261M413.5 249V264M414.5 247V267M415.5 250V265M416.5 248V266M417.5 247V266M418.5 245V268M419.5 249V262M420.5 248V265M421.5 251V262M422.5 252V265M423.5 244V261M424.5 252V261M425.5 251V261M426.5 244V260M427.5 251V260M428.5 249V264M429.5 251V259M430.5 250V262M431.5 245V259M432.5 251V261M433.5 249V262M434.5 214V290M435.5 246V265M436.5 244V266M437.5 235V267M438.5 239V276M439.5 240V266M440.5 230V279M441.5 241V269M442.5 228V268M443.5 242V264M444.5 228V275M445.5 241V269M446.5 240V266M447.5 227V272M448.5 243V266M449.5 241V269M450.5 233V275M451.5 238V268M452.5 242V269M453.5 242V279M454.5 238V274M455.5 226V270M456.5 238V269M457.5 233V269M458.5 231V280M459.5 231V269M460.5 243V276M461.5 244V271M462.5 240V283M463.5 238V280M464.5 241V278M465.5 239V282M466.5 241V279M467.5 240V273M468.5 237V269M469.5 230V269M470.5 240V267M471.5 241V270M472.5 234V268M473.5 235V266M474.5 240V269M475.5 226V278M476.5 235V266M477.5 239V274M478.5 240V271M479.5 238V267M480.5 231V275M481.5 240V272M482.5 240V270M483.5 239V269M484.5 241V270M485.5 238V269M486.5 242V274M487.5 242V279M488.5 240V274M489.5 242V276M490.5 242V267M491.5 242V273M492.5 237V268M493.5 240V276M494.5 239V268M495.5 242V268M496.5 244V270M497.5 246V276M498.5 245V267M499.5 244V269M500.5 242V263M501.5 250V261M502.5 251V261M503.5 246V268M504.5 244V263M505.5 246V260M506.5 248V261M507.5 244V261M508.5 247V264M509.5 242V268M510.5 245V263M511.5 243V269M512.5 246V264M513.5 246V263M514.5 244V270M515.5 245V267M516.5 240V263M517.5 235V267M518.5 244V263M519.5 243V268M520.5 235V265M521.5 229V266M522.5 240V264M523.5 228V265M524.5 230V269M525.5 240V270M526.5 244V279M527.5 227V276M528.5 239V265M529.5 233V265M530.5 231V264M531.5 239V276M532.5 244V268M533.5 244V262M534.5 244V282M535.5 230V269M536.5 245V269M537.5 239V264M538.5 243V272M539.5 249V263M540.5 246V263M541.5 247V267M542.5 248V266M543.5 247V267M544.5 246V268M545.5 246V269M546.5 246V275M547.5 242V266M548.5 244V268M549.5 240V270M550.5 239V266M551.5 232V272M552.5 236V266M553.5 244V268M554.5 235V267M555.5 243V267M556.5 234V266M557.5 245V271M558.5 234V271M559.5 240V271M560.5 244V268M561.5 245V264M562.5 243V266M563.5 244V263M564.5 240V266M565.5 246V264M566.5 245V263M567.5 247V278M568.5 226V271M569.5 229V267M570.5 232V265M571.5 234V270M572.5 227V265M573.5 232V265M574.5 240V282M575.5 247V265M576.5 246V266M577.5 248V280M578.5 232V267M579.5 246V270M580.5 248V264M581.5 228V266M582.5 242V282M583.5 224V269M584.5 245V268M585.5 226V281M586.5 244V279M587.5 243V271M588.5 245V280M589.5 223V268M590.5 238V267M591.5 228V267M592.5 246V275M593.5 244V280M594.5 229V274M595.5 244V273M596.5 226V267M597.5 245V264M598.5 244V273M599.5 246V262M600.5 246V271M601.5 235V264M602.5 239V279M603.5 241V262M604.5 247V282M605.5 240V262M606.5 241V261M607.5 226V264M608.5 244V266M609.5 249V268M610.5 247V261M611.5 235V260M612.5 247V274M613.5 248V262M614.5 243V262M615.5 231V285M616.5 250V266M617.5 237V265M618.5 229V267M619.5 249V268M620.5 241V264M621.5 240V275M622.5 244V267M623.5 233V272M624.5 243V283M625.5 247V275M626.5 247V269M627.5 246V265M628.5 234V275M629.5 233V265M630.5 242V265M631.5 239V269M632.5 246V271M633.5 235V271M634.5 228V266M635.5 245V265M636.5 240V267M637.5 241V265M638.5 231V263M639.5 226V269M640.5 239V275M641.5 245V263M642.5 245V264M643.5 245V271M644.5 242V266M645.5 240V265M646.5 231V266M647.5 247V267M648.5 236V278M649.5 232V267M650.5 244V268M651.5 246V282M652.5 247V270M653.5 233V283M654.5 247V269M655.5 234V266M656.5 247V279M657.5 247V268M658.5 246V269M659.5 246V268M660.5 226V276M661.5 235V270M662.5 242V273M663.5 241V271M664.5 229V270M665.5 240V282M666.5 236V267M667.5 239V272M668.5 242V267M669.5 235V278M670.5 238V278M671.5 240V267M672.5 232V267M673.5 233V266M674.5 241V267M675.5 238V267M676.5 241V268M677.5 238V269" stroke="#fff" stroke-width="1"/><path d="M26 399.5H50" stroke="#f00" stroke-width="2"/><path d="M50.5 383V411M51.5 379V411M52.5 384V414M53.5 383V416M54.5 383V416M55.5 382V413M56.5 379V413M57.5 379V413M58.5 382V417M59.5 380V411M60.5 383V419M61.5 379V423M62.5 376V425M63.5 380V420M64.5 380V415M65.5 371V417M66.5 376V425M67.5 379V417M68.5 375V422M69.5 385V417M70.5 380V417M71.5 372V420M72.5 380V418M73.5 378V425M74.5 383V417M75.5 380V416M76.5 380V418M77.5 383V420M78.5 382V413M79.5 371V415M80.5 383V415M81.5 373V423M82.5 381V414M83.5 385V422M84.5 384V416M85.5 382V413M86.5 382V411M87.5 385V415M88.5 376V416M89.5 385V417M90.5 386V412M91.5 375V422M92.5 383V420M93.5 382V414M94.5 380V424M95.5 377V415M96.5 377V417M97.5 383V420M98.5 375V418M99.5 372V413M100.5 383V417M101.5 387V411M102.5 382V413M103.5 390V408M104.5 378V410M105.5 393V408M106.5 392V419M107.5 392V409M108.5 392V411M109.5 391V410M110.5 383V420M111.5 381V408M112.5 389V419M113.5 391V409M114.5 387V410M115.5 383V416M116.5 388V408M117.5 391V408M118.5 392V414M119.5 391V419M120.5 384V405M121.5 386V412M122.5 390V410M123.5 390V416M124.5 390V413M125.5 377V418M126.5 389V412M127.5 390V409M128.5 380V418M129.5 391V410M130.5 385V408M131.5 381V420M132.5 386V410M133.5 380V412M134.5 390V408M135.5 390V418M136.5 386V415M137.5 381V422M138.5 389V411M139.5 378V419M140.5 386V418M141.5 388V413M142.5 389V416M143.5 388V418M144.5 373V414M145.5 383V425M146.5 382V417M147.5 378V411M148.5 373V420M149.5 377V423M150.5 387V409M151.5 386V415M152.5 373V425M153.5 383V417M154.5 378V412M155.5 373V426M156.5 378V425M157.5 376V420M158.5 383V415M159.5 382V414M160.5 368V417M161.5 379V418M162.5 378V419M163.5 376V416M164.5 374V418M165.5 376V427M166.5 377V421M167.5 368V432M168.5 378V416M169.5 367V422M170.5 381V418M171.5 381V421M172.5 382V419M173.5 365V429M174.5 381V423M175.5 370V423M176.5 381V420M177.5 378V431M178.5 375V421M179.5 375V415M180.5 374V427M181.5 375V417M182.5 383V413M183.5 386V414M184.5 381V426M185.5 384V419M186.5 376V423M187.5 383V430M188.5 375V417M189.5 380V424M190.5 367V418M191.5 377V421M192.5 379V418M193.5 367V421M194.5 370V415M195.5 369V426M196.5 380V420M197.5 373V421M198.5 374V416M199.5 375V419M200.5 370V420M201.5 366V424M202.5 377V422M203.5 377V427M204.5 378V425M205.5 377V428M206.5 379V426M207.5 372V419M208.5 381V420M209.5 374V418M210.5 384V419M211.5 374V414M212.5 373V417M213.5 386V411M214.5 385V414M215.5 387V410M216.5 383V412M217.5 384V414M218.5 381V416M219.5 387V411M220.5 378V410M221.5 389V410M222.5 379V414M223.5 377V416M224.5 387V412M225.5 381V409M226.5 379V411M227.5 389V409M228.5 388V406M229.5 389V410M230.5 393V408M231.5 394V404M232.5 394V408M233.5 388V406M234.5 391V406M235.5 390V411M236.5 392V407M237.5 390V410M238.5 393V406M239.5 389V405M240.5 387V406M241.5 387V407M242.5 392V405M243.5 392V406M244.5 388V410M245.5 389V406M246.5 389V410M247.5 392V405M248.5 391V406M249.5 393V407M250.5 394V411M251.5 393V411M252.5 389V404M253.5 387V410M254.5 391V411M255.5 391V404M256.5 393V405M257.5 387V410M258.5 393V405M259.5 394V405M260.5 393V406M261.5 394V409M262.5 394V411M263.5 392V407M264.5 389V407M265.5 393V406M266.5 392V406M267.5 388V407M268.5 389V406M269.5 392V406M270.5 391V412M271.5 392V406M272.5 392V406M273.5 387V411M274.5 393V405M275.5 392V407M276.5 394V406M277.5 392V405M278.5 392V406M279.5 392V405M280.5 393V405M281.5 394V405M282.5 394V404M283.5 394V404M284.5 394V405M285.5 394V405M286.5 393V403M287.5 395V405M288.5 393V405M289.5 394V405M290.5 396V404M291.5 392V404M292.5 395V405M293.5 391V404M294.5 395V406M295.5 389V405M296.5 394V407M297.5 394V405M298.5 391V408M299.5 389V405M300.5 394V405M301.5 395V405M302.5 390V409M303.5 394V405M304.5 390V409M305.5 389V406M306.5 390V408M307.5 390V406M308.5 387V408M309.5 393V406M310.5 393V406M311.5 389V406M312.5 391V408M313.5 393V405M314.5 392V406M315.5 390V408M316.5 389V406M317.5 390V405M318.5 387V406M319.5 391V405M320.5 392V407M321.5 392V408M322.5 390V409M323.5 390V406M324.5 392V405M325.5 390V408M326.5 389V409M327.5 394V409M328.5 393V406M329.5 386V406M330.5 392V405M331.5 394V405M332.5 393V407M333.5 394V405M334.5 393V409M335.5 385V409M336.5 390V406M337.5 387V407M338.5 393V408M339.5 386V407M340.5 386V407M341.5 385V410M342.5 386V412M343.5 387V406M344.5 390V408M345.5 388V406M346.5 389V406M347.5 392V407M348.5 387V407M349.5 391V405M350.5 391V406M351.5 391V406M352.5 392V406M353.5 388V409M354.5 388V413M355.5 387V406M356.5 390V409M357.5 385V409M358.5 392V409M359.5 386V413M360.5 389V406M361.5 392V409M362.5 385V405M363.5 388V410M364.5 388V406M365.5 393V406M366.5 392V416M367.5 391V417M368.5 384V411M369.5 391V411M370.5 384V409M371.5 393V416M372.5 387V409M373.5 390V407M374.5 388V414M375.5 389V412M376.5 385V408M377.5 387V417M378.5 386V406M379.5 387V411M380.5 385V412M381.5 382V417M382.5 392V409M383.5 392V417M384.5 392V409M385.5 387V409M386.5 391V409M387.5 390V409M388.5 385V407M389.5 388V411M390.5 387V413M391.5 382V417M392.5 391V408M393.5 392V412M394.5 390V414M395.5 389V414M396.5 392V411M397.5 390V414M398.5 392V407M399.5 386V408M400.5 390V409M401.5 384V410M402.5 387V412M403.5 388V407M404.5 394V407M405.5 389V411M406.5 393V411M407.5 391V405M408.5 392V409M409.5 396V406M410.5 392V407M411.5 393V405M412.5 394V410M413.5 394V407M414.5 392V406M415.5 393V407M416.5 389V410M417.5 394V407M418.5 391V411M419.5 392V407M420.5 392V408M421.5 389V412M422.5 388V403M423.5 391V405M424.5 393V404M425.5 389V410M426.5 392V406M427.5 393V411M428.5 390V405M429.5 391V412M430.5 393V406M431.5 393V406M432.5 392V410M433.5 390V413M434.5 387V417M435.5 380V420M436.5 386V421M437.5 377V414M438.5 386V413M439.5 377V424M440.5 386V414M441.5 383V414M442.5 380V423M443.5 376V415M444.5 374V421M445.5 388V423M446.5 374V423M447.5 379V422M448.5 383V412M449.5 380V416M450.5 388V411M451.5 375V423M452.5 386V409M453.5 378V411M454.5 374V414M455.5 376V411M456.5 375V413M457.5 379V417M458.5 380V416M459.5 379V415M460.5 381V416M461.5 373V417M462.5 370V425M463.5 380V424M464.5 370V418M465.5 376V421M466.5 375V416M467.5 373V416M468.5 376V415M469.5 377V424M470.5 379V417M471.5 378V418M472.5 382V418M473.5 382V424M474.5 375V425M475.5 376V427M476.5 383V423M477.5 381V425M478.5 381V421M479.5 378V423M480.5 379V414M481.5 381V420M482.5 377V412M483.5 380V418M484.5 386V411M485.5 383V416M486.5 386V416M487.5 388V416M488.5 384V420M489.5 381V412M490.5 382V413M491.5 382V418M492.5 380V412M493.5 381V413M494.5 381V415M495.5 381V419M496.5 382V415M497.5 384V411M498.5 384V410M499.5 383V410M500.5 390V412M501.5 392V407M502.5 388V407M503.5 388V409M504.5 384V408M505.5 386V412M506.5 387V409M507.5 388V412M508.5 388V411M509.5 387V412M510.5 388V413M511.5 390V409M512.5 390V410M513.5 391V408M514.5 389V413M515.5 391V408M516.5 390V412M517.5 383V408M518.5 381V418M519.5 384V414M520.5 377V423M521.5 386V418M522.5 388V411M523.5 374V416M524.5 383V412M525.5 385V408M526.5 383V423M527.5 389V407M528.5 381V420M529.5 384V408M530.5 380V417M531.5 385V420M532.5 381V420M533.5 384V413M534.5 378V418M535.5 376V423M536.5 379V411M537.5 384V416M538.5 380V412M539.5 388V414M540.5 388V413M541.5 387V417M542.5 388V413M543.5 379V414M544.5 387V413M545.5 380V414M546.5 378V416M547.5 385V409M548.5 382V412M549.5 380V412M550.5 382V410M551.5 382V417M552.5 381V416M553.5 384V409M554.5 389V409M555.5 389V412M556.5 388V413M557.5 379V419M558.5 389V412M559.5 384V410M560.5 382V417M561.5 388V413M562.5 389V411M563.5 388V417M564.5 379V417M565.5 385V416M566.5 382V415M567.5 389V413M568.5 371V418M569.5 388V415M570.5 387V413M571.5 383V414M572.5 386V416M573.5 370V416M574.5 382V414M575.5 384V414M576.5 385V415M577.5 371V415M578.5 372V417M579.5 379V417M580.5 384V424M581.5 380V413M582.5 385V415M583.5 380V414M584.5 384V413M585.5 368V420M586.5 372V424M587.5 386V415M588.5 376V414M589.5 381V417M590.5 379V410M591.5 389V411M592.5 390V412M593.5 390V411M594.5 379V412M595.5 378V415M596.5 374V417M597.5 374V414M598.5 386V425M599.5 380V412M600.5 375V419M601.5 382V406M602.5 375V407M603.5 392V410M604.5 391V408M605.5 386V413M606.5 381V423M607.5 381V423M608.5 386V408M609.5 380V428M610.5 389V416M611.5 386V427M612.5 389V413M613.5 386V411M614.5 378V406M615.5 387V427M616.5 385V405M617.5 382V416M618.5 373V424M619.5 373V407M620.5 388V417M621.5 388V409M622.5 391V407M623.5 390V410M624.5 380V407M625.5 388V406M626.5 386V415M627.5 382V417M628.5 383V419M629.5 376V422M630.5 391V425M631.5 384V426M632.5 376V415M633.5 391V411M634.5 376V411M635.5 390V419M636.5 380V419M637.5 389V425M638.5 376V413M639.5 380V415M640.5 387V419M641.5 368V414M642.5 374V425M643.5 389V424M644.5 390V414M645.5 390V412M646.5 388V417M647.5 384V425M648.5 375V410M649.5 387V411M650.5 373V421M651.5 372V422M652.5 375V416M653.5 372V422M654.5 373V423M655.5 380V411M656.5 379V419M657.5 370V420M658.5 372V424M659.5 384V424M660.5 380V415M661.5 382V416M662.5 382V420M663.5 383V416M664.5 378V425M665.5 377V418M666.5 382V420M667.5 374V415M668.5 383V417M669.5 377V421M670.5 388V424M671.5 385V418M672.5 388V418M673.5 387V417M674.5 379V417M675.5 383V420M676.5 382V416M677.5 382V417" stroke="#f00" stroke-width="1"/><path d="M24 544.5H678" stroke="#00ff00" stroke-width="2"/><path d="M30 688.5H50" stroke="#6a5acd" stroke-width="1"/><path d="M50.5 679V697M51.5 680V697M52.5 677V698M53.5 680V697M54.5 678V697M55.5 677V697M56.5 678V698M57.5 678V696M58.5 679V697M59.5 680V698M60.5 676V697M61.5 675V702M62.5 677V700M63.5 680V695M64.5 672V696M65.5 679V702M66.5 675V696M67.5 678V697M68.5 678V696M69.5 676V697M70.5 678V697M71.5 679V697M72.5 674V701M73.5 677V696M74.5 681V696M75.5 680V696M76.5 680V696M77.5 681V699M78.5 679V698M79.5 680V698M80.5 675V697M81.5 682V698M82.5 680V700M83.5 682V701M84.5 682V699M85.5 680V697M86.5 674V700M87.5 682V698M88.5 678V696M89.5 683V698M90.5 677V697M91.5 680V697M92.5 680V701M93.5 673V697M94.5 681V696M95.5 675V696M96.5 680V695M97.5 676V698M98.5 680V698M99.5 676V702M100.5 675V696M101.5 676V701M102.5 676V698M103.5 680V695M104.5 678V696M105.5 679V693M106.5 683V693M107.5 680V695M108.5 683V692M109.5 676V692M110.5 677V698M111.5 681V701M112.5 680V693M113.5 677V695M114.5 677V699M115.5 684V693M116.5 685V699M117.5 679V694M118.5 684V695M119.5 678V698M120.5 678V701M121.5 679V699M122.5 684V692M123.5 678V696M124.5 683V693M125.5 683V694M126.5 682V695M127.5 684V693M128.5 684V693M129.5 684V695M130.5 684V699M131.5 681V695M132.5 680V693M133.5 683V692M134.5 682V694M135.5 682V693M136.5 678V692M137.5 681V693M138.5 682V698M139.5 682V693M140.5 682V703M141.5 680V694M142.5 673V700M143.5 674V697M144.5 675V696M145.5 680V702M146.5 678V702M147.5 679V703M148.5 681V700M149.5 681V696M150.5 675V698M151.5 676V696M152.5 677V703M153.5 678V696M154.5 678V704M155.5 676V698M156.5 681V696M157.5 676V697M158.5 680V697M159.5 680V699M160.5 677V698M161.5 677V704M162.5 679V698M163.5 676V706M164.5 671V701M165.5 680V705M166.5 669V705M167.5 676V698M168.5 675V703M169.5 669V699M170.5 675V697M171.5 675V700M172.5 676V700M173.5 670V698M174.5 676V699M175.5 671V699M176.5 671V706M177.5 671V704M178.5 677V701M179.5 672V699M180.5 675V705M181.5 670V699M182.5 678V698M183.5 677V701M184.5 677V705M185.5 674V702M186.5 672V700M187.5 674V700M188.5 677V699M189.5 672V706M190.5 679V704M191.5 680V701M192.5 679V706M193.5 678V701M194.5 679V698M195.5 680V697M196.5 680V700M197.5 674V702M198.5 678V707M199.5 679V698M200.5 677V696M201.5 670V702M202.5 678V697M203.5 672V699M204.5 678V698M205.5 678V701M206.5 678V702M207.5 679V701M208.5 675V699M209.5 671V706M210.5 674V699M211.5 678V700M212.5 678V696M213.5 677V695M214.5 677V699M215.5 680V698M216.5 680V696M217.5 677V702M218.5 680V700M219.5 680V702M220.5 681V699M221.5 681V698M222.5 677V701M223.5 677V698M224.5 680V698M225.5 678V698M226.5 677V699M227.5 678V696M228.5 680V695M229.5 685V694M230.5 686V693M231.5 685V692M232.5 684V692M233.5 685V691M234.5 683V695M235.5 685V692M236.5 682V695M237.5 685V692M238.5 685V693M239.5 682V692M240.5 682V691M241.5 685V693M242.5 682V693M243.5 683V692M244.5 684V693M245.5 685V692M246.5 684V694M247.5 685V692M248.5 681V694M249.5 684V695M250.5 682V695M251.5 683V694M252.5 684V693M253.5 683V692M254.5 684V695M255.5 684V692M256.5 684V692M257.5 685V695M258.5 683V691M259.5 684V691M260.5 684V696M261.5 681V692M262.5 682V693M263.5 685V692M264.5 682V694M265.5 682V696M266.5 684V694M267.5 682V695M268.5 681V695M269.5 685V692M270.5 683V691M271.5 685V692M272.5 685V691M273.5 684V691M274.5 686V693M275.5 682V691M276.5 684V691M277.5 686V691M278.5 685V692M279.5 684V692M280.5 684V692M281.5 685V692M282.5 686V692M283.5 684V692M284.5 683V692M285.5 685V691M286.5 685V693M287.5 684V691M288.5 686V691M289.5 684V692M290.5 684V691M291.5 685V692M292.5 685V691M293.5 683V691M294.5 684V693M295.5 683V693M296.5 685V692M297.5 682V691M298.5 685V694M299.5 686V693M300.5 683V691M301.5 682V693M302.5 686V694M303.5 682V692M304.5 686V693M305.5 684V693M306.5 685V692M307.5 683V693M308.5 686V692M309.5 685V692M310.5 682V694M311.5 686V693M312.5 686V693M313.5 685V693M314.5 682V694M315.5 686V692M316.5 683V692M317.5 683V692M318.5 684V693M319.5 685V692M320.5 684V693M321.5 685V692M322.5 684V693M323.5 682V692M324.5 681V693M325.5 684V693M326.5 684V694M327.5 685V695M328.5 684V692M329.5 684V692M330.5 684V694M331.5 683V695M332.5 684V692M333.5 680V694M334.5 680V691M335.5 685V693M336.5 684V691M337.5 685V692M338.5 685V693M339.5 680V692M340.5 682V693M341.5 681V695M342.5 681V692M343.5 682V694M344.5 684V692M345.5 682V693M346.5 682V694M347.5 682V692M348.5 681V695M349.5 685V694M350.5 681V693M351.5 685V693M352.5 682V693M353.5 682V696M354.5 684V696M355.5 685V695M356.5 680V694M357.5 683V693M358.5 683V694M359.5 683V693M360.5 681V692M361.5 683V694M362.5 679V692M363.5 684V696M364.5 682V691M365.5 678V692M366.5 681V692M367.5 680V693M368.5 681V696M369.5 681V693M370.5 683V695M371.5 682V696M372.5 684V692M373.5 684V697M374.5 684V696M375.5 683V698M376.5 682V697M377.5 685V697M378.5 684V692M379.5 680V692M380.5 682V692M381.5 683V694M382.5 683V697M383.5 684V698M384.5 684V698M385.5 684V696M386.5 679V696M387.5 680V693M388.5 678V693M389.5 681V697M390.5 681V696M391.5 682V698M392.5 685V698M393.5 680V692M394.5 683V693M395.5 684V697M396.5 679V696M397.5 684V696M398.5 679V696M399.5 679V698M400.5 681V695M401.5 684V695M402.5 684V692M403.5 685V692M404.5 686V691M405.5 685V691M406.5 686V694M407.5 683V692M408.5 684V694M409.5 685V693M410.5 684V691M411.5 683V694M412.5 684V693M413.5 683V692M414.5 683V693M415.5 685V692M416.5 685V692M417.5 683V693M418.5 683V695M419.5 683V692M420.5 686V693M421.5 683V693M422.5 685V694M423.5 685V693M424.5 685V695M425.5 684V691M426.5 684V692M427.5 686V692M428.5 686V695M429.5 686V693M430.5 686V692M431.5 684V693M432.5 683V694M433.5 682V693M434.5 677V697M435.5 681V699M436.5 679V696M437.5 676V701M438.5 679V695M439.5 677V699M440.5 678V699M441.5 673V695M442.5 679V700M443.5 675V702M444.5 680V697M445.5 677V701M446.5 676V699M447.5 680V700M448.5 680V697M449.5 680V698M450.5 679V699M451.5 678V698M452.5 677V696M453.5 676V699M454.5 675V699M455.5 678V701M456.5 677V697M457.5 674V698M458.5 680V702M459.5 678V698M460.5 673V700M461.5 680V699M462.5 678V698M463.5 675V698M464.5 678V702M465.5 676V699M466.5 673V700M467.5 674V697M468.5 678V697M469.5 677V699M470.5 679V699M471.5 673V701M472.5 679V698M473.5 675V697M474.5 672V702M475.5 675V700M476.5 675V699M477.5 676V700M478.5 677V699M479.5 678V699M480.5 679V697M481.5 679V700M482.5 679V699M483.5 679V699M484.5 679V697M485.5 677V699M486.5 680V697M487.5 679V700M488.5 679V697M489.5 679V698M490.5 678V698M491.5 679V702M492.5 677V697M493.5 679V697M494.5 675V697M495.5 676V696M496.5 682V696M497.5 682V695M498.5 682V695M499.5 684V695M500.5 681V692M501.5 685V691M502.5 684V693M503.5 682V695M504.5 681V692M505.5 683V693M506.5 684V693M507.5 682V696M508.5 680V693M509.5 683V694M510.5 680V693M511.5 682V696M512.5 681V693M513.5 682V695M514.5 682V696M515.5 681V694M516.5 681V694M517.5 678V694M518.5 679V698M519.5 678V699M520.5 680V699M521.5 681V699M522.5 676V697M523.5 677V699M524.5 682V695M525.5 681V699M526.5 675V695M527.5 674V694M528.5 679V700M529.5 680V701M530.5 681V694M531.5 675V698M532.5 682V696M533.5 679V693M534.5 674V693M535.5 675V698M536.5 679V695M537.5 683V696M538.5 676V694M539.5 681V696M540.5 676V697M541.5 676V697M542.5 681V699M543.5 682V697M544.5 682V694M545.5 682V695M546.5 678V698M547.5 679V695M548.5 682V696M549.5 682V696M550.5 679V695M551.5 677V695M552.5 677V695M553.5 682V699M554.5 681V696M555.5 678V695M556.5 679V699M557.5 680V694M558.5 681V698M559.5 681V697M560.5 679V697M561.5 679V695M562.5 678V697M563.5 682V693M564.5 680V696M565.5 679V695M566.5 674V697M567.5 680V695M568.5 682V695M569.5 676V697M570.5 674V696M571.5 674V703M572.5 677V701M573.5 681V697M574.5 681V696M575.5 672V696M576.5 672V700M577.5 682V697M578.5 680V698M579.5 672V699M580.5 679V699M581.5 680V697M582.5 679V702M583.5 674V697M584.5 676V701M585.5 677V703M586.5 680V696M587.5 679V696M588.5 673V697M589.5 676V698M590.5 678V696M591.5 675V702M592.5 671V698M593.5 678V698M594.5 672V696M595.5 681V698M596.5 673V695M597.5 680V699M598.5 678V695M599.5 676V701M600.5 678V702M601.5 684V695M602.5 682V693M603.5 682V703M604.5 677V692M605.5 678V698M606.5 683V694M607.5 684V695M608.5 677V694M609.5 682V693M610.5 673V694M611.5 681V694M612.5 681V700M613.5 675V698M614.5 674V694M615.5 678V695M616.5 683V695M617.5 684V698M618.5 684V699M619.5 677V692M620.5 681V698M621.5 678V698M622.5 683V700M623.5 683V692M624.5 677V695M625.5 682V693M626.5 681V698M627.5 683V697M628.5 680V702M629.5 680V694M630.5 678V694M631.5 682V702M632.5 677V696M633.5 681V694M634.5 679V696M635.5 671V696M636.5 679V697M637.5 680V697M638.5 680V695M639.5 680V700M640.5 683V699M641.5 672V699M642.5 680V702M643.5 676V697M644.5 683V702M645.5 680V697M646.5 683V696M647.5 675V699M648.5 682V700M649.5 675V695M650.5 677V696M651.5 681V696M652.5 679V696M653.5 671V696M654.5 671V696M655.5 681V697M656.5 671V697M657.5 671V698M658.5 682V698M659.5 681V699M660.5 679V697M661.5 679V697M662.5 673V698M663.5 676V701M664.5 677V699M665.5 679V698M666.5 675V696M667.5 680V702M668.5 675V696M669.5 680V697M670.5 678V697M671.5 675V699M672.5 675V699M673.5 674V700M674.5 677V699M675.5 674V700M676.5 677V697M677.5 674V700" stroke="#6a5acd" stroke-width="1"/><path d="M18 834.5H50" stroke="#1e90ff" stroke-width="2"/><path d="M50.5 826V843M51.5 828V841M52.5 828V841M53.5 828V841M54.5 826V844M55.5 825V842M56.5 826V843M57.5 826V842M58.5 823V844M59.5 825V843M60.5 825V847M61.5 825V846M62.5 818V844M63.5 825V845M64.5 819V844M65.5 826V843M66.5 826V846M67.5 820V844M68.5 826V846M69.5 821V845M70.5 824V847M71.5 821V844M72.5 822V842M73.5 823V847M74.5 821V843M75.5 820V848M76.5 826V843M77.5 826V842M78.5 822V845M79.5 824V849M80.5 826V842M81.5 828V842M82.5 821V844M83.5 828V842M84.5 828V844M85.5 827V841M86.5 823V846M87.5 824V842M88.5 824V843M89.5 829V843M90.5 823V845M91.5 828V847M92.5 821V843M93.5 819V843M94.5 828V844M95.5 821V844M96.5 824V843M97.5 826V842M98.5 825V843M99.5 819V840M100.5 826V847M101.5 824V839M102.5 827V843M103.5 822V839M104.5 823V844M105.5 829V841M106.5 824V839M107.5 825V842M108.5 829V839M109.5 828V839M110.5 822V839M111.5 828V842M112.5 827V839M113.5 828V841M114.5 823V838M115.5 823V846M116.5 826V844M117.5 829V847M118.5 825V843M119.5 828V840M120.5 826V844M121.5 831V840M122.5 827V840M123.5 830V840M124.5 830V840M125.5 828V842M126.5 826V840M127.5 830V846M128.5 827V843M129.5 826V840M130.5 827V840M131.5 826V845M132.5 831V844M133.5 830V838M134.5 830V842M135.5 824V846M136.5 829V841M137.5 822V846M138.5 823V840M139.5 827V840M140.5 827V842M141.5 822V845M142.5 826V840M143.5 825V849M144.5 825V847M145.5 823V848M146.5 825V842M147.5 825V847M148.5 826V841M149.5 821V844M150.5 823V842M151.5 826V843M152.5 825V842M153.5 826V850M154.5 825V842M155.5 822V843M156.5 828V846M157.5 823V843M158.5 822V850M159.5 826V846M160.5 827V847M161.5 824V848M162.5 819V845M163.5 820V852M164.5 824V850M165.5 822V852M166.5 825V846M167.5 825V845M168.5 817V847M169.5 824V853M170.5 826V843M171.5 819V846M172.5 818V845M173.5 816V843M174.5 824V851M175.5 821V841M176.5 823V842M177.5 818V847M178.5 822V850M179.5 818V848M180.5 820V846M181.5 819V846M182.5 816V848M183.5 820V852M184.5 816V848M185.5 824V847M186.5 817V845M187.5 823V845M188.5 823V850M189.5 820V844M190.5 821V849M191.5 823V844M192.5 823V849M193.5 822V844M194.5 824V845M195.5 822V847M196.5 824V846M197.5 826V846M198.5 821V847M199.5 822V844M200.5 826V850M201.5 820V848M202.5 816V844M203.5 819V843M204.5 821V851M205.5 822V847M206.5 816V845M207.5 824V852M208.5 820V844M209.5 825V843M210.5 826V852M211.5 823V848M212.5 826V848M213.5 823V848M214.5 825V847M215.5 824V841M216.5 822V842M217.5 821V843M218.5 825V843M219.5 825V841M220.5 826V841M221.5 822V842M222.5 827V842M223.5 824V844M224.5 822V843M225.5 821V842M226.5 827V844M227.5 826V842M228.5 827V841M229.5 831V839M230.5 830V837M231.5 832V837M232.5 831V840M233.5 828V837M234.5 831V837M235.5 830V838M236.5 830V837M237.5 831V838M238.5 829V837M239.5 829V838M240.5 828V840M241.5 831V840M242.5 830V841M243.5 831V838M244.5 830V838M245.5 830V839M246.5 831V841M247.5 831V840M248.5 827V837M249.5 827V838M250.5 830V837M251.5 827V838M252.5 830V842M253.5 831V838M254.5 828V838M255.5 830V838M256.5 830V839M257.5 830V842M258.5 829V838M259.5 828V838M260.5 827V838M261.5 831V839M262.5 828V841M263.5 827V838M264.5 830V841M265.5 828V841M266.5 831V837M267.5 830V841M268.5 829V838M269.5 829V838M270.5 828V838M271.5 828V838M272.5 829V838M273.5 831V838M274.5 832V837M275.5 830V839M276.5 831V837M277.5 831V838M278.5 829V837M279.5 830V838M280.5 830V838M281.5 832V838M282.5 831V838M283.5 830V837M284.5 832V838M285.5 831V837M286.5 832V838M287.5 831V838M288.5 831V838M289.5 831V838M290.5 832V838M291.5 831V838M292.5 832V837M293.5 829V837M294.5 829V839M295.5 829V837M296.5 831V839M297.5 830V837M298.5 831V837M299.5 831V837M300.5 829V837M301.5 831V839M302.5 829V839M303.5 831V837M304.5 830V839M305.5 829V839M306.5 831V839M307.5 828V838M308.5 831V839M309.5 831V837M310.5 831V837M311.5 828V839M312.5 831V838M313.5 831V839M314.5 830V838M315.5 828V839M316.5 831V840M317.5 832V839M318.5 831V838M319.5 828V838M320.5 831V838M321.5 829V839M322.5 829V838M323.5 828V838M324.5 831V838M325.5 831V838M326.5 829V840M327.5 828V841M328.5 826V839M329.5 827V841M330.5 829V841M331.5 829V840M332.5 827V841M333.5 829V838M334.5 830V840M335.5 828V840M336.5 830V840M337.5 826V838M338.5 830V839M339.5 831V840M340.5 827V838M341.5 827V838M342.5 827V838M343.5 828V837M344.5 830V838M345.5 827V840M346.5 831V839M347.5 827V841M348.5 830V838M349.5 828V838M350.5 829V839M351.5 831V838M352.5 830V838M353.5 829V840M354.5 828V839M355.5 828V842M356.5 830V841M357.5 831V842M358.5 824V839M359.5 827V839M360.5 824V839M361.5 830V840M362.5 826V841M363.5 830V841M364.5 830V839M365.5 824V840M366.5 830V839M367.5 830V838M368.5 826V838M369.5 827V840M370.5 825V838M371.5 830V841M372.5 828V837M373.5 828V838M374.5 824V840M375.5 826V841M376.5 827V843M377.5 830V839M378.5 827V839M379.5 825V839M380.5 827V840M381.5 829V843M382.5 824V844M383.5 830V840M384.5 831V842M385.5 828V840M386.5 829V839M387.5 830V840M388.5 827V838M389.5 830V839M390.5 826V840M391.5 825V840M392.5 831V839M393.5 831V841M394.5 829V840M395.5 828V841M396.5 830V842M397.5 831V841M398.5 829V842M399.5 826V840M400.5 830V841M401.5 831V837M402.5 830V841M403.5 830V840M404.5 830V839M405.5 831V841M406.5 831V837M407.5 830V841M408.5 831V839M409.5 832V837M410.5 831V837M411.5 830V837M412.5 831V839M413.5 831V841M414.5 830V840M415.5 829V839M416.5 831V839M417.5 830V838M418.5 832V841M419.5 831V841M420.5 828V838M421.5 829V838M422.5 829V840M423.5 832V840M424.5 832V841M425.5 830V841M426.5 831V840M427.5 831V838M428.5 832V840M429.5 828V838M430.5 832V837M431.5 832V840M432.5 831V839M433.5 826V842M434.5 830V845M435.5 825V840M436.5 828V847M437.5 827V844M438.5 826V846M439.5 825V845M440.5 820V841M441.5 824V846M442.5 821V847M443.5 824V845M444.5 823V847M445.5 826V840M446.5 826V842M447.5 822V844M448.5 826V841M449.5 825V849M450.5 826V848M451.5 825V845M452.5 825V848M453.5 821V846M454.5 823V846M455.5 824V846M456.5 819V844M457.5 823V846M458.5 822V850M459.5 823V845M460.5 826V844M461.5 820V846M462.5 821V849M463.5 819V849M464.5 818V849M465.5 822V845M466.5 825V849M467.5 823V844M468.5 824V847M469.5 820V844M470.5 825V845M471.5 825V846M472.5 820V844M473.5 826V849M474.5 825V842M475.5 823V846M476.5 824V841M477.5 824V847M478.5 820V842M479.5 822V846M480.5 822V842M481.5 824V842M482.5 823V843M483.5 822V844M484.5 824V843M485.5 822V844M486.5 825V844M487.5 826V843M488.5 823V843M489.5 825V843M490.5 824V844M491.5 822V842M492.5 822V842M493.5 825V847M494.5 822V847M495.5 825V843M496.5 825V843M497.5 825V842M498.5 826V841M499.5 829V841M500.5 830V841M501.5 828V840M502.5 830V839M503.5 830V840M504.5 826V838M505.5 827V840M506.5 828V839M507.5 827V842M508.5 828V838M509.5 828V839M510.5 829V840M511.5 829V841M512.5 829V842M513.5 830V842M514.5 827V840M515.5 829V842M516.5 826V840M517.5 825V841M518.5 826V844M519.5 826V843M520.5 825V847M521.5 820V848M522.5 826V840M523.5 824V840M524.5 826V843M525.5 822V844M526.5 819V846M527.5 820V844M528.5 826V848M529.5 824V844M530.5 827V841M531.5 827V840M532.5 826V842M533.5 823V841M534.5 826V842M535.5 824V846M536.5 820V839M537.5 827V841M538.5 826V840M539.5 829V845M540.5 829V843M541.5 826V839M542.5 829V842M543.5 825V845M544.5 829V840M545.5 824V845M546.5 828V841M547.5 828V841M548.5 827V841M549.5 827V840M550.5 828V842M551.5 827V841M552.5 828V841M553.5 824V840M554.5 828V841M555.5 828V841M556.5 828V845M557.5 825V842M558.5 825V842M559.5 825V843M560.5 826V842M561.5 822V844M562.5 825V843M563.5 827V840M564.5 824V840M565.5 826V845M566.5 825V842M567.5 825V841M568.5 822V841M569.5 821V846M570.5 823V845M571.5 828V849M572.5 825V849M573.5 825V848M574.5 826V843M575.5 827V847M576.5 824V842M577.5 829V848M578.5 829V842M579.5 828V846M580.5 829V847M581.5 820V843M582.5 824V844M583.5 825V843M584.5 828V841M585.5 824V842M586.5 822V846M587.5 820V844M588.5 825V844M589.5 824V846M590.5 819V843M591.5 820V849M592.5 825V845M593.5 818V845M594.5 827V848M595.5 826V841M596.5 821V842M597.5 819V842M598.5 827V840M599.5 822V839M600.5 828V840M601.5 823V850M602.5 819V846M603.5 821V843M604.5 826V840M605.5 819V847M606.5 830V839M607.5 820V848M608.5 819V839M609.5 827V847M610.5 829V842M611.5 830V838M612.5 828V845M613.5 830V841M614.5 830V839M615.5 821V850M616.5 830V839M617.5 830V840M618.5 829V839M619.5 826V841M620.5 825V848M621.5 819V848M622.5 830V848M623.5 830V844M624.5 823V841M625.5 822V843M626.5 820V840M627.5 825V842M628.5 828V845M629.5 818V846M630.5 825V842M631.5 827V849M632.5 819V842M633.5 828V843M634.5 818V842M635.5 821V848M636.5 826V845M637.5 822V841M638.5 821V841M639.5 827V841M640.5 817V840M641.5 827V844M642.5 827V844M643.5 821V843M644.5 822V845M645.5 823V849M646.5 828V841M647.5 828V849M648.5 826V844M649.5 824V846M650.5 829V845M651.5 829V844M652.5 829V842M653.5 824V844M654.5 828V847M655.5 828V842M656.5 828V843M657.5 826V848M658.5 828V847M659.5 823V845M660.5 827V843M661.5 820V845M662.5 822V844M663.5 820V844M664.5 825V846M665.5 821V848M666.5 825V843M667.5 824V845M668.5 822V847M669.5 820V846M670.5 806V866M671.5 814V848M672.5 826V842M673.5 824V843M674.5 821V847M675.5 823V843M676.5 825V842M677.5 820V848" stroke="#1e90ff" stroke-width="1"/><path d="M30 255.5H678" stroke="#d0d0d0" stroke-width="1" stroke-dasharray="3 3" fill="none"/><path d="M30 399.5H678" stroke="#d0d0d0" stroke-width="1" stroke-dasharray="3 3" fill="none"/><path d="M30 544.5H678" stroke="#d0d0d0" stroke-width="1" stroke-dasharray="3 3" fill="none"/><path d="M30 688.5H678" stroke="#d0d0d0" stroke-width="1" stroke-dasharray="3 3" fill="none"/><path d="M30 834.5H678" stroke="#d0d0d0" stroke-width="1" stroke-dasharray="3 3" fill="none"/></svg>
<div class="t" style="left:22.00px;top:253.54px;font-size:12px;color:#d4d0d4;letter-spacing:-0.427px;">0.0</div>
<div class="t" style="left:22.40px;top:289.84px;font-size:12px;color:#d4d0d4;letter-spacing:-0.120px;">-0.5</div>
<div class="t" style="left:22.70px;top:327.14px;font-size:12px;color:#d4d0d4;letter-spacing:-0.660px;">1.0</div>
<div class="t" style="left:22.00px;top:363.34px;font-size:12px;color:#d4d0d4;letter-spacing:-0.427px;">0.5</div>
<div class="t" style="left:22.00px;top:398.54px;font-size:12px;color:#d4d0d4;letter-spacing:-0.427px;">0.0</div>
<div class="t" style="left:22.40px;top:434.84px;font-size:12px;color:#d4d0d4;letter-spacing:-0.120px;">-0.5</div>
<div class="t" style="left:22.70px;top:471.14px;font-size:12px;color:#d4d0d4;letter-spacing:-0.660px;">1.0</div>
<div class="t" style="left:22.00px;top:507.34px;font-size:12px;color:#d4d0d4;letter-spacing:-0.427px;">0.5</div>
<div class="t" style="left:22.00px;top:542.54px;font-size:12px;color:#d4d0d4;letter-spacing:-0.427px;">0.0</div>
<div class="t" style="left:22.40px;top:578.84px;font-size:12px;color:#d4d0d4;letter-spacing:-0.120px;">-0.5</div>
<div class="t" style="left:22.70px;top:616.14px;font-size:12px;color:#d4d0d4;letter-spacing:-0.660px;">1.0</div>
<div class="t" style="left:22.00px;top:652.34px;font-size:12px;color:#d4d0d4;letter-spacing:-0.427px;">0.5</div>
<div class="t" style="left:22.00px;top:687.54px;font-size:12px;color:#d4d0d4;letter-spacing:-0.427px;">0.0</div>
<div class="t" style="left:22.40px;top:723.84px;font-size:12px;color:#d4d0d4;letter-spacing:-0.120px;">-0.5</div>
<div class="t" style="left:22.70px;top:761.14px;font-size:12px;color:#d4d0d4;letter-spacing:-0.660px;">1.0</div>
<div class="t" style="left:22.00px;top:797.34px;font-size:12px;color:#d4d0d4;letter-spacing:-0.427px;">0.5</div>
<div class="t" style="left:22.00px;top:832.54px;font-size:12px;color:#d4d0d4;letter-spacing:-0.427px;">0.0</div>
<div class="t" style="left:22.40px;top:868.84px;font-size:12px;color:#d4d0d4;letter-spacing:-0.120px;">-0.5</div>
<svg style="left:0;top:0" width="60" height="240" viewBox="0 0 60 240"><rect x="22.5" y="186" width="16.5" height="21" fill="#000c98"/><rect x="22.5" y="210" width="16.5" height="20.5" fill="#000c98"/><text x="24" y="200" font-family="Liberation Sans" font-size="12" fill="#a0a4d4" textLength="13" lengthAdjust="spacingAndGlyphs">1.0</text><path d="M24.4 185.4C22.799999999999997 185.4 22.4 186.6 22.4 188.8V193.5C22.4 195.5 21.9 196.2 20.799999999999997 196.5C21.9 196.8 22.4 197.5 22.4 199.5V204.2C22.4 206.4 22.799999999999997 207.6 24.4 207.6" fill="none" stroke="#1ea0ff" stroke-width="2.3" stroke-linejoin="round"/><path d="M37 185.4C38.6 185.4 39.0 186.6 39.0 188.8V193.5C39.0 195.5 39.5 196.2 40.6 196.5C39.5 196.8 39.0 197.5 39.0 199.5V204.2C39.0 206.4 38.6 207.6 37 207.6" fill="none" stroke="#1ea0ff" stroke-width="2.3" stroke-linejoin="round"/><path d="M24.4 209.6C22.799999999999997 209.6 22.4 210.79999999999998 22.4 213.0V217.39999999999998C22.4 219.39999999999998 21.9 220.09999999999997 20.799999999999997 220.39999999999998C21.9 220.7 22.4 221.39999999999998 22.4 223.39999999999998V227.79999999999998C22.4 230.0 22.799999999999997 231.2 24.4 231.2" fill="none" stroke="#1ea0ff" stroke-width="2.3" stroke-linejoin="round"/><path d="M37 209.6C38.6 209.6 39.0 210.79999999999998 39.0 213.0V217.39999999999998C39.0 219.39999999999998 39.5 220.09999999999997 40.6 220.39999999999998C39.5 220.7 39.0 221.39999999999998 39.0 223.39999999999998V227.79999999999998C39.0 230.0 38.6 231.2 37 231.2" fill="none" stroke="#1ea0ff" stroke-width="2.3" stroke-linejoin="round"/><path d="M23.6 196.6H37.8M27.6 193.0L23.4 196.6L27.6 200.2M33.8 193.0L38 196.6L33.8 200.2" fill="none" stroke="#fff" stroke-width="1.5"/><path d="M23.6 225.8H37.8M27.6 222.20000000000002L23.4 225.8L27.6 229.4M33.8 222.20000000000002L38 225.8L33.8 229.4" fill="none" stroke="#fff" stroke-width="1.5"/><polyline points="23.6,215.4 25.2,215 26.2,212.6 27.2,217 28.2,211.6 29.4,218.4 30.6,211.2 31.8,218.8 33,211.8 34.2,217 35.2,212.8 36.4,215.2 37.8,215" fill="none" stroke="#fff" stroke-width="1.1"/></svg>
<div class="a" style="left:18px;top:525px;width:3px;height:41px;background:#1e78e0"></div>
<svg style="left:0;top:0" width="60" height="1080"><polygon points="17,537.5 28.5,544.5 17,551.5" fill="#b4ffb4"/></svg>
<div class="a" style="left:-2px;top:230px;width:16px;height:16px;background:#fff;border:1px solid #000"></div><div class="a" style="left:0;top:231px;width:4px;height:5px;background:#000"></div><div class="a" style="left:-3px;top:247px;width:17px;height:16px;background:#87ceeb;border:1px solid #000;border-radius:2.5px"></div><svg style="left:0;top:247px" width="14" height="16"><polyline points="-0.5,6.5 3.7,12 11.8,3.6" fill="none" stroke="#000" stroke-width="1.5"/></svg><div class="a" style="left:-3px;top:263px;width:17px;height:16px;background:#d3d3d3;border:1px solid #000;border-radius:8px"></div>
<div class="a" style="left:-2px;top:375.8px;width:16px;height:16px;background:#fff;border:1px solid #000"></div><div class="a" style="left:8px;top:376.8px;width:5px;height:5px;background:#000"></div><div class="a" style="left:-3px;top:392.8px;width:17px;height:16px;background:#87ceeb;border:1px solid #000;border-radius:2.5px"></div><svg style="left:0;top:392.8px" width="14" height="16"><polyline points="-0.5,6.5 3.7,12 11.8,3.6" fill="none" stroke="#000" stroke-width="1.5"/></svg><div class="a" style="left:-3px;top:408.8px;width:17px;height:16px;background:#d3d3d3;border:1px solid #000;border-radius:8px"></div>
<div class="a" style="left:-2px;top:520.8px;width:16px;height:16px;background:#fff;border:1px solid #000"></div><div class="a" style="left:3px;top:521.8px;width:6px;height:5px;background:#000"></div><div class="a" style="left:-3px;top:537.8px;width:17px;height:16px;background:#87ceeb;border:1px solid #000;border-radius:2.5px"></div><svg style="left:0;top:537.8px" width="14" height="16"><polyline points="-0.5,6.5 3.7,12 11.8,3.6" fill="none" stroke="#000" stroke-width="1.5"/></svg><div class="a" style="left:-3px;top:553.8px;width:17px;height:16px;background:#d3d3d3;border:1px solid #000;border-radius:8px"></div>
<div class="a" style="left:-2px;top:665.6px;width:16px;height:16px;background:#000;border:1px solid #000"></div><div class="a" style="left:-2px;top:666.6px;width:15px;height:14px;border:1px solid #fff"></div><div class="a" style="left:3px;top:671.6px;width:4px;height:4px;border-radius:2px;background:#fff"></div><div class="a" style="left:-3px;top:682.6px;width:17px;height:16px;background:#87ceeb;border:1px solid #000;border-radius:2.5px"></div><svg style="left:0;top:682.6px" width="14" height="16"><polyline points="-0.5,6.5 3.7,12 11.8,3.6" fill="none" stroke="#000" stroke-width="1.5"/></svg><div class="a" style="left:-3px;top:698.6px;width:17px;height:16px;background:#d3d3d3;border:1px solid #000;border-radius:8px"></div>
<div class="a" style="left:-2px;top:811.6px;width:16px;height:16px;background:#fff;border:1px solid #000"></div><div class="a" style="left:0;top:816.6px;width:4px;height:6px;background:#000"></div><div class="a" style="left:-3px;top:828.6px;width:17px;height:16px;background:#87ceeb;border:1px solid #000;border-radius:2.5px"></div><svg style="left:0;top:828.6px" width="14" height="16"><polyline points="-0.5,6.5 3.7,12 11.8,3.6" fill="none" stroke="#000" stroke-width="1.5"/></svg><div class="a" style="left:-3px;top:844.6px;width:17px;height:16px;background:#d3d3d3;border:1px solid #000;border-radius:8px"></div>
<div class="a" style="left:17px;top:906px;width:661px;height:1px;background:#9a9a9a"></div>
<div class="a" style="left:17px;top:907px;width:661px;height:2px;background:#f0f0f0"></div>
<div class="a" style="left:17px;top:909px;width:661px;height:10px;background:#000"></div>
<div class="a" style="left:15px;top:908px;width:2px;height:32px;background:#6e6e6e"></div>
<div class="a" style="left:15px;top:908px;width:1px;height:32px;background:#b4b4b4"></div>
<div class="a" style="left:15px;top:940px;width:663px;height:1px;background:#fff"></div>
<svg style="left:0;top:0" width="678" height="1080" viewBox="0 0 678 1080" shape-rendering="crispEdges"><path d="M48.5 909V919M78.5 909V919M109.5 909V919M139.5 909V919M170.5 909V919M201.5 909V919M231.5 909V919M262.5 909V919M292.5 909V919M323.5 909V919M354.5 909V919M384.5 909V919M415.5 909V919M445.5 909V919M476.5 909V919M507.5 909V919M537.5 909V919M568.5 909V919M599.5 909V919M629.5 909V919M660.5 909V919" stroke="#808080" stroke-width="1" fill="none"/><path d="M17.5 919v6M18.5 919v6M23.5 919v2M29.5 919v2M35.5 919v2M41.5 919v2M48.5 919v4M54.5 919v2M60.5 919v2M66.5 919v2M72.5 919v2M78.5 919v6M84.5 919v2M90.5 919v2M97.5 919v2M103.5 919v2M109.5 919v4M115.5 919v2M121.5 919v2M127.5 919v2M133.5 919v2M139.5 919v6M146.5 919v2M152.5 919v2M158.5 919v2M164.5 919v2M170.5 919v4M176.5 919v2M182.5 919v2M188.5 919v2M194.5 919v2M201.5 919v6M207.5 919v2M213.5 919v2M219.5 919v2M225.5 919v2M231.5 919v4M237.5 919v2M243.5 919v2M250.5 919v2M256.5 919v2M262.5 919v6M268.5 919v2M274.5 919v2M280.5 919v2M286.5 919v2M292.5 919v4M299.5 919v2M305.5 919v2M311.5 919v2M317.5 919v2M323.5 919v6M329.5 919v2M335.5 919v2M341.5 919v2M348.5 919v2M354.5 919v4M360.5 919v2M366.5 919v2M372.5 919v2M378.5 919v2M384.5 919v6M390.5 919v2M397.5 919v2M403.5 919v2M409.5 919v2M415.5 919v4M421.5 919v2M427.5 919v2M433.5 919v2M439.5 919v2M445.5 919v6M452.5 919v2M458.5 919v2M464.5 919v2M470.5 919v2M476.5 919v4M482.5 919v2M488.5 919v2M494.5 919v2M501.5 919v2M507.5 919v6M513.5 919v2M519.5 919v2M525.5 919v2M531.5 919v2M537.5 919v4M543.5 919v2M550.5 919v2M556.5 919v2M562.5 919v2M568.5 919v6M574.5 919v2M580.5 919v2M586.5 919v2M592.5 919v2M599.5 919v4M605.5 919v2M611.5 919v2M617.5 919v2M623.5 919v2M629.5 919v6M635.5 919v2M641.5 919v2M648.5 919v2M654.5 919v2M660.5 919v4M666.5 919v2M672.5 919v2M678.5 919v2M684.5 919v2" stroke="#000" stroke-width="1" fill="none"/></svg>
<div class="t" style="left:18.70px;top:920.78px;font-size:14.5px;color:#14142a;letter-spacing:0.295px;">0:00</div>
<div class="t" style="left:79.92px;top:920.78px;font-size:14.5px;color:#14142a;letter-spacing:0.295px;">0:10</div>
<div class="t" style="left:141.14px;top:920.78px;font-size:14.5px;color:#14142a;letter-spacing:0.295px;">0:20</div>
<div class="t" style="left:202.36px;top:920.78px;font-size:14.5px;color:#14142a;letter-spacing:0.295px;">0:30</div>
<div class="t" style="left:263.58px;top:920.78px;font-size:14.5px;color:#14142a;letter-spacing:0.295px;">0:40</div>
<div class="t" style="left:324.80px;top:920.78px;font-size:14.5px;color:#14142a;letter-spacing:0.295px;">0:50</div>
<div class="t" style="left:386.92px;top:920.78px;font-size:14.5px;color:#14142a;letter-spacing:0.295px;">1:00</div>
<div class="t" style="left:448.14px;top:920.78px;font-size:14.5px;color:#14142a;letter-spacing:0.295px;">1:10</div>
<div class="t" style="left:509.36px;top:920.78px;font-size:14.5px;color:#14142a;letter-spacing:0.295px;">1:20</div>
<div class="t" style="left:570.58px;top:920.78px;font-size:14.5px;color:#14142a;letter-spacing:0.295px;">1:30</div>
<div class="t" style="left:631.80px;top:920.78px;font-size:14.5px;color:#14142a;letter-spacing:0.295px;">1:40</div>
<div class="a" style="left:15px;top:945px;width:663px;height:65px;background:#6e6e6e"></div>
<div class="a" style="left:15px;top:945px;width:1px;height:65px;background:#b4b4b4"></div>
<div class="a" style="left:15px;top:945px;width:663px;height:1px;background:#a8a8a8"></div>
<div class="a" style="left:17px;top:947px;width:661px;height:46px;background:#1c1c98"></div>
<div class="a" style="left:17px;top:993px;width:661px;height:18px;background:#f0f0f0"></div>
<div class="a" style="left:18px;top:947px;width:10px;height:46px;background:linear-gradient(90deg,#7474c4,#1c1c98)"></div>
<div class="a" style="left:17px;top:947px;width:1px;height:46px;background:#a8f0a8"></div>
<div class="a" style="left:18px;top:948px;width:3px;height:43px;background:#2a90f0"></div>
<svg style="left:0;top:0" width="678" height="1080" viewBox="0 0 678 1080" shape-rendering="crispEdges"><path d="M48.5 947V993M78.5 947V993M109.5 947V993M139.5 947V993M170.5 947V993M201.5 947V993M231.5 947V993M262.5 947V993M292.5 947V993M323.5 947V993M354.5 947V993M384.5 947V993M415.5 947V993M445.5 947V993M476.5 947V993M507.5 947V993M537.5 947V993M568.5 947V993M599.5 947V993M629.5 947V993M660.5 947V993" stroke="#808080" stroke-width="1" fill="none"/><path d="M18 955.5H678M18 964.5H678M18 973.5H678M18 982.5H678" stroke="#4a4640" stroke-width="1" fill="none"/><path d="M21 950.5H678" stroke="#ffffff" stroke-width="1" fill="none"/><path d="M50 950.5h54M109 950.5h3M129 950.5h10M142 950.5h33M179 950.5h21M202 950.5h29M436 950.5h60M506 950.5h5M521 950.5h5M532 950.5h5M543 950.5h3M551 950.5h5M568 950.5h10M580 950.5h20M609 950.5h4M627 950.5h11M643 950.5h21M669 950.5h10" stroke="#ffffff" stroke-width="3" fill="none"/><path d="M104 950.0h5M116 950.0h11M139 950.0h3M175 950.0h4M200 950.0h2M234 950.0h3M244 950.0h5M254 950.0h4M267 950.0h10M281 950.0h2M291 950.0h4M300 950.0h3M323 950.0h2M336 950.0h7M348 950.0h3M354 950.0h6M369 950.0h4M426 950.0h7M496 950.0h8M511 950.0h10M526 950.0h6M537 950.0h6M546 950.0h5M559 950.0h9M578 950.0h2M600 950.0h5M613 950.0h14M638 950.0h5" stroke="#ffffff" stroke-width="2" fill="none"/><path d="M21 959.5H678" stroke="#ff2424" stroke-width="1" fill="none"/><path d="M50 959.5h54M115 959.5h3M140 959.5h46M192 959.5h37M439 959.5h56M523 959.5h15M552 959.5h6M566 959.5h32M606 959.5h3M610 959.5h1M618 959.5h2M631 959.5h27M664 959.5h16" stroke="#ff2424" stroke-width="3" fill="none"/><path d="M104 959.0h11M118 959.0h1M121 959.0h5M137 959.0h3M244 959.0h7M256 959.0h11M286 959.0h14M305 959.0h5M330 959.0h1M347 959.0h5M357 959.0h4M368 959.0h9M393 959.0h1M406 959.0h12M431 959.0h8M495 959.0h5M502 959.0h8M517 959.0h6M538 959.0h5M547 959.0h5M558 959.0h8M598 959.0h2M609 959.0h1M611 959.0h7M620 959.0h1M627 959.0h4M658 959.0h6" stroke="#ff2424" stroke-width="2" fill="none"/><path d="M21 968.5H678" stroke="#38c038" stroke-width="1" fill="none"/><path d="M21 977.5H678" stroke="#7868d0" stroke-width="1" fill="none"/><path d="M60 977.5h2M66 977.5h11M162 977.5h3M169 977.5h6M195 977.5h6M435 977.5h4M473 977.5h3M489 977.5h1M673 977.5h7" stroke="#7868d0" stroke-width="3" fill="none"/><path d="M53 977.0h4M58 977.0h1M62 977.0h4M77 977.0h2M91 977.0h2M100 977.0h6M118 977.0h5M157 977.0h5M165 977.0h4M175 977.0h11M192 977.0h3M201 977.0h12M243 977.0h4M268 977.0h2M272 977.0h2M279 977.0h3M325 977.0h2M337 977.0h5M361 977.0h3M439 977.0h6M459 977.0h6M476 977.0h11M494 977.0h2M509 977.0h2M526 977.0h4M532 977.0h3M554 977.0h5M564 977.0h2M580 977.0h4M585 977.0h5M630 977.0h4M649 977.0h2M656 977.0h4M666 977.0h7" stroke="#7868d0" stroke-width="2" fill="none"/><path d="M21 987.5H678" stroke="#2a90f0" stroke-width="1" fill="none"/><path d="M50 987.5h29M83 987.5h4M89 987.5h6M155 987.5h15M173 987.5h14M192 987.5h5M199 987.5h15M216 987.5h1M223 987.5h1M435 987.5h30M468 987.5h1M472 987.5h27M507 987.5h4M517 987.5h2M521 987.5h1M529 987.5h1M533 987.5h6M548 987.5h9M563 987.5h3M572 987.5h6M585 987.5h1M588 987.5h9M630 987.5h5M660 987.5h20" stroke="#2a90f0" stroke-width="3" fill="none"/><path d="M79 987.0h4M87 987.0h2M95 987.0h14M110 987.0h4M115 987.0h6M142 987.0h5M152 987.0h3M170 987.0h3M187 987.0h5M197 987.0h2M214 987.0h2M224 987.0h2M227 987.0h4M233 987.0h2M240 987.0h12M266 987.0h1M289 987.0h10M302 987.0h4M325 987.0h6M338 987.0h5M367 987.0h5M378 987.0h6M388 987.0h7M519 987.0h2M557 987.0h6M567 987.0h5M584 987.0h1M586 987.0h2M597 987.0h5M604 987.0h4M616 987.0h2M620 987.0h6M635 987.0h4M645 987.0h15" stroke="#2a90f0" stroke-width="2" fill="none"/><path d="M18.5 993v7M23.5 993v3M29.5 993v3M35.5 993v3M41.5 993v3M48.5 993v7M54.5 993v3M60.5 993v3M66.5 993v3M72.5 993v3M78.5 993v7M84.5 993v3M90.5 993v3M97.5 993v3M103.5 993v3M109.5 993v7M115.5 993v3M121.5 993v3M127.5 993v3M133.5 993v3M139.5 993v7M146.5 993v3M152.5 993v3M158.5 993v3M164.5 993v3M170.5 993v7M176.5 993v3M182.5 993v3M188.5 993v3M194.5 993v3M201.5 993v7M207.5 993v3M213.5 993v3M219.5 993v3M225.5 993v3M231.5 993v7M237.5 993v3M243.5 993v3M250.5 993v3M256.5 993v3M262.5 993v7M268.5 993v3M274.5 993v3M280.5 993v3M286.5 993v3M292.5 993v7M299.5 993v3M305.5 993v3M311.5 993v3M317.5 993v3M323.5 993v7M329.5 993v3M335.5 993v3M341.5 993v3M348.5 993v3M354.5 993v7M360.5 993v3M366.5 993v3M372.5 993v3M378.5 993v3M384.5 993v7M390.5 993v3M397.5 993v3M403.5 993v3M409.5 993v3M415.5 993v7M421.5 993v3M427.5 993v3M433.5 993v3M439.5 993v3M445.5 993v7M452.5 993v3M458.5 993v3M464.5 993v3M470.5 993v3M476.5 993v7M482.5 993v3M488.5 993v3M494.5 993v3M501.5 993v3M507.5 993v7M513.5 993v3M519.5 993v3M525.5 993v3M531.5 993v3M537.5 993v7M543.5 993v3M550.5 993v3M556.5 993v3M562.5 993v3M568.5 993v7M574.5 993v3M580.5 993v3M586.5 993v3M592.5 993v3M599.5 993v7M605.5 993v3M611.5 993v3M617.5 993v3M623.5 993v3M629.5 993v7M635.5 993v3M641.5 993v3M648.5 993v3M654.5 993v3M660.5 993v7M666.5 993v3M672.5 993v3M678.5 993v3M684.5 993v3" stroke="#000" stroke-width="1" fill="none"/></svg>
<svg style="left:0;top:0" width="60" height="1080"><polygon points="17,963.5 28,970 17,976.5" fill="#a0ffa0"/></svg>
<div class="t" style="left:18.20px;top:992.64px;font-size:12px;color:#101018;letter-spacing:-0.214px;">0:00</div>
<div class="t" style="left:48.81px;top:992.64px;font-size:12px;color:#101018;letter-spacing:-0.214px;">0:05</div>
<div class="t" style="left:79.42px;top:992.64px;font-size:12px;color:#101018;letter-spacing:-0.214px;">0:10</div>
<div class="t" style="left:110.03px;top:992.64px;font-size:12px;color:#101018;letter-spacing:-0.214px;">0:15</div>
<div class="t" style="left:140.64px;top:992.64px;font-size:12px;color:#101018;letter-spacing:-0.214px;">0:20</div>
<div class="t" style="left:171.25px;top:992.64px;font-size:12px;color:#101018;letter-spacing:-0.214px;">0:25</div>
<div class="t" style="left:201.86px;top:992.64px;font-size:12px;color:#101018;letter-spacing:-0.214px;">0:30</div>
<div class="t" style="left:232.47px;top:992.64px;font-size:12px;color:#101018;letter-spacing:-0.214px;">0:35</div>
<div class="t" style="left:263.08px;top:992.64px;font-size:12px;color:#101018;letter-spacing:-0.214px;">0:40</div>
<div class="t" style="left:293.69px;top:992.64px;font-size:12px;color:#101018;letter-spacing:-0.214px;">0:45</div>
<div class="t" style="left:324.30px;top:992.64px;font-size:12px;color:#101018;letter-spacing:-0.214px;">0:50</div>
<div class="t" style="left:354.91px;top:992.64px;font-size:12px;color:#101018;letter-spacing:-0.214px;">0:55</div>
<div class="t" style="left:386.22px;top:992.64px;font-size:12px;color:#101018;letter-spacing:-0.214px;">1:00</div>
<div class="t" style="left:416.83px;top:992.64px;font-size:12px;color:#101018;letter-spacing:-0.214px;">1:05</div>
<div class="t" style="left:447.44px;top:992.64px;font-size:12px;color:#101018;letter-spacing:-0.214px;">1:10</div>
<div class="t" style="left:478.05px;top:992.64px;font-size:12px;color:#101018;letter-spacing:-0.214px;">1:15</div>
<div class="t" style="left:508.66px;top:992.64px;font-size:12px;color:#101018;letter-spacing:-0.214px;">1:20</div>
<div class="t" style="left:539.27px;top:992.64px;font-size:12px;color:#101018;letter-spacing:-0.214px;">1:25</div>
<div class="t" style="left:569.88px;top:992.64px;font-size:12px;color:#101018;letter-spacing:-0.214px;">1:30</div>
<div class="t" style="left:600.49px;top:992.64px;font-size:12px;color:#101018;letter-spacing:-0.214px;">1:35</div>
<div class="t" style="left:631.10px;top:992.64px;font-size:12px;color:#101018;letter-spacing:-0.214px;">1:40</div>
<div class="t" style="left:661.71px;top:992.64px;font-size:12px;color:#101018;letter-spacing:-0.214px;">1:45</div>
<div class="a" style="left:0;top:1011px;width:514px;height:26px;background:linear-gradient(90deg,#000068,#1414a0)"></div>
<div class="t" style="left:81.90px;top:1014.80px;font-size:15px;color:#fff;letter-spacing:-0.224px;">Unlicensed version. Please click here to buy a license.</div>
<div class="a" style="left:514px;top:1011px;width:164px;height:26px;background:#f0f0f0"></div>
<div class="a" style="left:515px;top:1012px;width:117px;height:24px;background:#e9e9e9;border:2px solid #c8c8c8"></div>
<div class="a" style="left:636px;top:1012px;width:64px;height:24px;background:#e9e9e9;border:2px solid #c8c8c8"></div>
<div class="t" style="left:545.00px;top:1013.84px;font-size:12px;color:#000;letter-spacing:-0.652px;">Buy License</div>
<div class="t" style="left:659.90px;top:1013.84px;font-size:12px;color:#000;letter-spacing:-0.438px;">Ent</div>
<div class="a" style="left:0;top:1037px;width:678px;height:39px;background:#f0f0f0"></div>
<div class="a" style="left:0;top:1057px;width:678px;height:1px;background:#e0e0e0"></div>
<div class="a" style="left:0;top:1075px;width:678px;height:1px;background:#dcdcdc"></div>
<div class="a" style="left:68px;top:1039px;width:1px;height:17px;background:#d8d8d8"></div>
<div class="a" style="left:188px;top:1039px;width:1px;height:17px;background:#d8d8d8"></div>
<div class="a" style="left:487px;top:1039px;width:1px;height:17px;background:#d8d8d8"></div>
<div class="a" style="left:627px;top:1039px;width:1px;height:17px;background:#d8d8d8"></div>
<div class="a" style="left:68px;top:1059px;width:1px;height:15px;background:#d8d8d8"></div>
<div class="a" style="left:188px;top:1059px;width:1px;height:15px;background:#d8d8d8"></div>
<div class="t" style="left:21.70px;top:1038.84px;font-size:12px;color:#111;letter-spacing:0.188px;">All</div>
<div class="t" style="left:103.70px;top:1038.84px;font-size:12px;color:#111;letter-spacing:-0.476px;">2:16.720</div>
<div class="t" style="left:264.90px;top:1038.84px;font-size:12px;color:#111;letter-spacing:-0.455px;">0.000 to 2:16.720 (2:16.720)</div>
<div class="t" style="left:540.40px;top:1038.84px;font-size:12px;color:#111;letter-spacing:-0.286px;">0.000</div>
<div class="t" style="left:631.90px;top:1038.84px;font-size:12px;color:#111;letter-spacing:-0.132px;">0 : Unlice</div>
<div class="t" style="left:11.90px;top:1058.84px;font-size:12px;color:#111;letter-spacing:0.169px;">Original</div>
<div class="t" style="left:109.70px;top:1058.84px;font-size:12px;color:#111;letter-spacing:-0.410px;">2:16.7</div>
<div class="t" style="left:191.70px;top:1058.84px;font-size:12px;color:#111;letter-spacing:-0.514px;">FLAC: Lossless Codec 24 bit, 88200Hz, 5 channel (4.1)</div>
<svg style="left:0;top:0" width="678" height="1080"><polygon points="57,1051.5 65,1051.5 61,1047" fill="#000"/></svg>
<svg style="left:0;top:0" width="678" height="1080"><polygon points="177,1047 185,1047 181,1051.5" fill="#000"/></svg>
<svg style="left:0;top:0" width="678" height="1080"><polygon points="477.5,1047 485.5,1047 481.5,1051.5" fill="#000"/></svg>
<svg style="left:0;top:0" width="678" height="1080"><polygon points="617,1051.5 625,1051.5 621,1047" fill="#000"/></svg>
<svg style="left:0;top:0" width="678" height="1080"><polygon points="177,1067 185,1067 181,1071.5" fill="#000"/></svg>
<div class="a" style="left:0;top:1076px;width:678px;height:4px;background:#e4e4e4"></div>
<div class="a" style="left:0;top:1076px;width:46px;height:4px;background:#000"></div>
<div class="a" style="left:334px;top:1076px;width:344px;height:4px;background:#0c0c0c"></div>
<div class="a" style="left:612px;top:1076px;width:44px;height:4px;background:#3a3a3a"></div>
<div class="a" style="left:215px;top:411px;width:298px;height:216px;box-shadow:0 0 0 1px rgba(0,0,40,0.55),1px 2px 4px rgba(0,0,0,0.5);background:#f0f0f0"></div>
<div class="a" style="left:215px;top:411px;width:298px;height:30px;background:#fff"></div>
<div class="t" style="left:223.20px;top:415.64px;font-size:12px;color:#000;letter-spacing:-0.166px;">Channel Selector</div>
<svg style="left:492px;top:419px" width="12" height="12"><path d="M1 1L11 11M11 1L1 11" stroke="#000" stroke-width="1.1" fill="none"/></svg>
<div class="a" style="left:224px;top:450px;width:88px;height:23px;background:#e1e1e1;border:2px solid #0078d7"></div>
<div class="a" style="left:320px;top:450px;width:88px;height:23px;background:#e1e1e1;border:1px solid #adadad"></div>
<div class="a" style="left:416px;top:450px;width:88px;height:23px;background:#e1e1e1;border:1px solid #adadad"></div>
<div class="a" style="left:320px;top:595px;width:88px;height:23px;background:#e1e1e1;border:1px solid #adadad"></div>
<div class="a" style="left:416px;top:595px;width:88px;height:23px;background:#e1e1e1;border:1px solid #adadad"></div>
<div class="t" style="left:258.00px;top:451.64px;font-size:12px;color:#000;letter-spacing:-0.154px;">Left</div>
<div class="t" style="left:355.40px;top:451.64px;font-size:12px;color:#000;letter-spacing:0.421px;">All</div>
<div class="t" style="left:445.60px;top:451.64px;font-size:12px;color:#000;letter-spacing:0.198px;">Right</div>
<div class="t" style="left:356.20px;top:596.64px;font-size:12px;color:#000;letter-spacing:-0.820px;">OK</div>
<div class="t" style="left:443.00px;top:596.64px;font-size:12px;color:#000;letter-spacing:-0.525px;">Cancel</div>
<div class="a" style="left:300px;top:481.0px;width:13px;height:13px;border-radius:7px;background:#fff;border:1px solid #333"></div>
<div class="a" style="left:322px;top:481.0px;width:13px;height:13px;background:#fff;border:1px solid #333"></div>
<svg style="left:322px;top:481.0px" width="13" height="13"><polyline points="2.8,6.6 5.3,9.2 10.4,3.4" fill="none" stroke="#222" stroke-width="1.2"/></svg>
<div class="t" style="left:338.00px;top:477.74px;font-size:12px;color:#000;letter-spacing:0.075px;">Front left</div>
<div class="a" style="left:300px;top:503.0px;width:13px;height:13px;border-radius:7px;background:#fff;border:1px solid #333"></div>
<div class="a" style="left:322px;top:503.0px;width:13px;height:13px;background:#fff;border:1px solid #333"></div>
<svg style="left:322px;top:503.0px" width="13" height="13"><polyline points="2.8,6.6 5.3,9.2 10.4,3.4" fill="none" stroke="#222" stroke-width="1.2"/></svg>
<div class="t" style="left:338.00px;top:499.74px;font-size:12px;color:#000;letter-spacing:0.147px;">Front right</div>
<div class="a" style="left:300px;top:525.0px;width:13px;height:13px;border-radius:7px;background:#fff;border:1px solid #333"></div>
<div class="a" style="left:322px;top:525.0px;width:13px;height:13px;background:#fff;border:1px solid #333"></div>
<svg style="left:322px;top:525.0px" width="13" height="13"><polyline points="2.8,6.6 5.3,9.2 10.4,3.4" fill="none" stroke="#222" stroke-width="1.2"/></svg>
<div class="t" style="left:338.00px;top:521.74px;font-size:12px;color:#000;letter-spacing:-0.236px;">Center</div>
<div class="a" style="left:300px;top:547.0px;width:13px;height:13px;border-radius:7px;background:#fff;border:1px solid #333"></div>
<div class="a" style="left:322px;top:547.0px;width:13px;height:13px;background:#fff;border:1px solid #333"></div>
<svg style="left:322px;top:547.0px" width="13" height="13"><polyline points="2.8,6.6 5.3,9.2 10.4,3.4" fill="none" stroke="#222" stroke-width="1.2"/></svg>
<div class="t" style="left:338.00px;top:543.74px;font-size:12px;color:#000;letter-spacing:-0.188px;">Low frequency</div>
<div class="a" style="left:300px;top:569.0px;width:13px;height:13px;border-radius:7px;background:#fff;border:1px solid #333"></div>
<div class="a" style="left:322px;top:569.0px;width:13px;height:13px;background:#fff;border:1px solid #333"></div>
<svg style="left:322px;top:569.0px" width="13" height="13"><polyline points="2.8,6.6 5.3,9.2 10.4,3.4" fill="none" stroke="#222" stroke-width="1.2"/></svg>
<div class="t" style="left:338.00px;top:565.74px;font-size:12px;color:#000;letter-spacing:-0.129px;">Side left</div>
</div></body></html>
